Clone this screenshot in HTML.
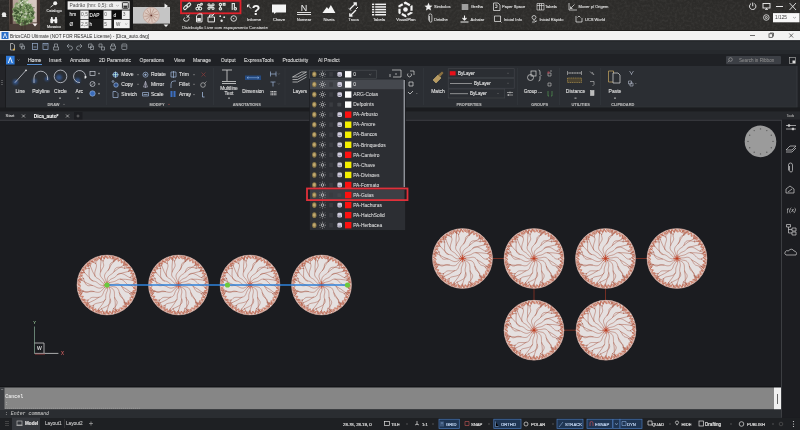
<!DOCTYPE html>
<html><head><meta charset="utf-8">
<style>
*{margin:0;padding:0}
html,body{width:800px;height:430px;overflow:hidden;background:#1b1c20}
svg{position:absolute;left:0;top:0;font-family:"Liberation Sans",sans-serif;will-change:transform}
</style></head><body>
<svg width="800" height="430" viewBox="0 0 800 430">
<defs><symbol id="tree" viewBox="-102 -102 204 204"><circle r="99" fill="#e5e0e0"/><path d="M88.0 0.0 L96.9 -3.9 M88.0 0.0 L96.9 3.9 M87.4 9.9 L96.7 7.0 M87.4 9.9 L95.9 14.7 M85.8 19.6 L95.4 17.8 M85.8 19.6 L93.6 25.3 M83.1 29.1 L92.8 28.4 M83.1 29.1 L90.2 35.7 M79.3 38.2 L89.0 38.6 M79.3 38.2 L85.6 45.5 M74.5 46.8 L84.1 48.3 M74.5 46.8 L80.0 54.9 M68.8 54.9 L78.2 57.4 M68.8 54.9 L73.4 63.5 M62.2 62.2 L71.3 65.8 M62.2 62.2 L65.8 71.3 M54.9 68.8 L63.5 73.4 M54.9 68.8 L57.4 78.2 M46.8 74.5 L54.9 80.0 M46.8 74.5 L48.3 84.1 M38.2 79.3 L45.5 85.6 M38.2 79.3 L38.6 89.0 M29.1 83.1 L35.7 90.2 M29.1 83.1 L28.4 92.8 M19.6 85.8 L25.3 93.6 M19.6 85.8 L17.8 95.4 M9.9 87.4 L14.7 95.9 M9.9 87.4 L7.0 96.7 M0.0 88.0 L3.9 96.9 M0.0 88.0 L-3.9 96.9 M-9.9 87.4 L-7.0 96.7 M-9.9 87.4 L-14.7 95.9 M-19.6 85.8 L-17.8 95.4 M-19.6 85.8 L-25.3 93.6 M-29.1 83.1 L-28.4 92.8 M-29.1 83.1 L-35.7 90.2 M-38.2 79.3 L-38.6 89.0 M-38.2 79.3 L-45.5 85.6 M-46.8 74.5 L-48.3 84.1 M-46.8 74.5 L-54.9 80.0 M-54.9 68.8 L-57.4 78.2 M-54.9 68.8 L-63.5 73.4 M-62.2 62.2 L-65.8 71.3 M-62.2 62.2 L-71.3 65.8 M-68.8 54.9 L-73.4 63.5 M-68.8 54.9 L-78.2 57.4 M-74.5 46.8 L-80.0 54.9 M-74.5 46.8 L-84.1 48.3 M-79.3 38.2 L-85.6 45.5 M-79.3 38.2 L-89.0 38.6 M-83.1 29.1 L-90.2 35.7 M-83.1 29.1 L-92.8 28.4 M-85.8 19.6 L-93.6 25.3 M-85.8 19.6 L-95.4 17.8 M-87.4 9.9 L-95.9 14.7 M-87.4 9.9 L-96.7 7.0 M-88.0 0.0 L-96.9 3.9 M-88.0 0.0 L-96.9 -3.9 M-87.4 -9.9 L-96.7 -7.0 M-87.4 -9.9 L-95.9 -14.7 M-85.8 -19.6 L-95.4 -17.8 M-85.8 -19.6 L-93.6 -25.3 M-83.1 -29.1 L-92.8 -28.4 M-83.1 -29.1 L-90.2 -35.7 M-79.3 -38.2 L-89.0 -38.6 M-79.3 -38.2 L-85.6 -45.5 M-74.5 -46.8 L-84.1 -48.3 M-74.5 -46.8 L-80.0 -54.9 M-68.8 -54.9 L-78.2 -57.4 M-68.8 -54.9 L-73.4 -63.5 M-62.2 -62.2 L-71.3 -65.8 M-62.2 -62.2 L-65.8 -71.3 M-54.9 -68.8 L-63.5 -73.4 M-54.9 -68.8 L-57.4 -78.2 M-46.8 -74.5 L-54.9 -80.0 M-46.8 -74.5 L-48.3 -84.1 M-38.2 -79.3 L-45.5 -85.6 M-38.2 -79.3 L-38.6 -89.0 M-29.1 -83.1 L-35.7 -90.2 M-29.1 -83.1 L-28.4 -92.8 M-19.6 -85.8 L-25.3 -93.6 M-19.6 -85.8 L-17.8 -95.4 M-9.9 -87.4 L-14.7 -95.9 M-9.9 -87.4 L-7.0 -96.7 M-0.0 -88.0 L-3.9 -96.9 M-0.0 -88.0 L3.9 -96.9 M9.9 -87.4 L7.0 -96.7 M9.9 -87.4 L14.7 -95.9 M19.6 -85.8 L17.8 -95.4 M19.6 -85.8 L25.3 -93.6 M29.1 -83.1 L28.4 -92.8 M29.1 -83.1 L35.7 -90.2 M38.2 -79.3 L38.6 -89.0 M38.2 -79.3 L45.5 -85.6 M46.8 -74.5 L48.3 -84.1 M46.8 -74.5 L54.9 -80.0 M54.9 -68.8 L57.4 -78.2 M54.9 -68.8 L63.5 -73.4 M62.2 -62.2 L65.8 -71.3 M62.2 -62.2 L71.3 -65.8 M68.8 -54.9 L73.4 -63.5 M68.8 -54.9 L78.2 -57.4 M74.5 -46.8 L80.0 -54.9 M74.5 -46.8 L84.1 -48.3 M79.3 -38.2 L85.6 -45.5 M79.3 -38.2 L89.0 -38.6 M83.1 -29.1 L90.2 -35.7 M83.1 -29.1 L92.8 -28.4 M85.8 -19.6 L93.6 -25.3 M85.8 -19.6 L95.4 -17.8 M87.4 -9.9 L95.9 -14.7 M87.4 -9.9 L96.7 -7.0 M96.0 2.9 L85.6 8.4 L94.7 15.9 L83.6 20.0 L91.6 28.7 L80.1 31.2 L86.9 40.9 L75.1 41.8 L80.5 52.3 L68.7 51.7 L72.6 62.8 L61.1 60.6 L63.4 72.1 L52.2 68.3 L53.0 80.1 L42.5 74.8 L41.6 86.5 L31.9 79.9 L29.4 91.4 L20.7 83.5 L16.7 94.5 L9.1 85.5 L3.7 95.9 L-2.6 86.0 L-9.4 95.5 L-14.3 84.8 L-22.3 93.4 L-25.7 82.1 L-34.8 89.5 L-36.6 77.8 L-46.7 83.9 L-46.9 72.1 L-57.7 76.7 L-56.3 65.1 L-67.6 68.2 L-64.6 56.8 L-76.3 58.3 L-71.7 47.5 L-83.5 47.4 L-77.5 37.3 L-89.2 35.6 L-81.9 26.4 L-93.2 23.1 L-84.7 15.0 L-95.5 10.2 L-85.9 3.3 L-96.0 -2.9 L-85.6 -8.4 L-94.7 -15.9 L-83.6 -20.0 L-91.6 -28.7 L-80.1 -31.2 L-86.9 -40.9 L-75.1 -41.8 L-80.5 -52.3 L-68.7 -51.7 L-72.6 -62.8 L-61.1 -60.6 L-63.4 -72.1 L-52.2 -68.3 L-53.0 -80.1 L-42.5 -74.8 L-41.6 -86.5 L-31.9 -79.9 L-29.4 -91.4 L-20.7 -83.5 L-16.7 -94.5 L-9.1 -85.5 L-3.7 -95.9 L2.6 -86.0 L9.4 -95.5 L14.3 -84.8 L22.3 -93.4 L25.7 -82.1 L34.8 -89.5 L36.6 -77.8 L46.7 -83.9 L46.9 -72.1 L57.7 -76.7 L56.3 -65.1 L67.6 -68.2 L64.6 -56.8 L76.3 -58.3 L71.7 -47.5 L83.5 -47.4 L77.5 -37.3 L89.2 -35.6 L81.9 -26.4 L93.2 -23.1 L84.7 -15.0 L95.5 -10.2 L85.9 -3.3 L96.0 2.9" fill="none" stroke="#c87058" stroke-width="2.2"/><circle r="98.5" fill="none" stroke="#d49a88" stroke-width="1.6"/><path d="M3.9 0.7 L6.4 1.4 L8.8 2.2 L11.2 3.0 L13.6 3.9 L16.0 4.6 L18.5 5.2 L21.0 5.7 L23.5 6.1 L26.0 6.6 L28.4 7.3 L30.8 8.3 L33.0 9.8 L35.0 11.8 L36.7 14.4 L38.2 17.4 L39.4 20.8 L40.3 24.3 L41.1 27.8 L41.8 31.1 L42.7 34.1 L43.9 36.7 L45.3 38.9 L47.1 40.7 L49.2 42.2 L51.3 43.6 L53.3 45.2 L55.0 47.0 L56.3 49.5 L56.9 52.6 L56.7 56.5 M56.7 56.5 L66.3 57.9 L75.0 59.9 M56.7 56.5 L58.1 66.1 L60.2 74.8 M40.6 25.6 Q50.1 38.2 59.5 59.3 M59.5 59.3 L72.0 63.5 M59.5 59.3 L63.8 71.7 M3.2 2.3 L5.3 3.8 L7.4 5.3 L9.5 6.7 L11.7 8.0 L13.9 9.3 L16.0 10.6 L18.0 12.2 L19.9 13.9 L21.5 16.1 L22.7 18.5 L23.6 21.4 L24.2 24.4 L24.4 27.7 L24.5 30.9 L24.5 34.1 L24.6 37.1 L24.9 39.9 L25.6 42.5 L26.7 44.8 L28.1 46.9 L29.6 48.9 L31.2 51.0 L32.5 53.1 L33.3 55.6 L33.4 58.4 L32.8 61.7 L31.2 65.3 L28.7 69.2 L25.4 73.2 L21.5 77.1 M21.5 77.1 L29.2 83.0 L35.8 89.1 M21.5 77.1 L18.0 86.1 L15.5 94.7 M25.2 40.9 Q28.2 56.4 27.3 79.4 M27.3 79.4 L36.6 88.7 M27.3 79.4 L25.8 92.5 M2.3 3.3 L3.8 5.3 L5.4 7.3 L6.9 9.3 L8.3 11.4 L9.5 13.7 L10.3 16.2 L10.8 18.8 L11.0 21.6 L10.8 24.5 L10.3 27.5 L9.7 30.3 L9.2 33.2 L8.8 35.9 L8.7 38.5 L8.9 41.0 L9.5 43.5 L10.2 45.9 L11.1 48.3 L11.8 50.8 L12.1 53.3 L11.9 56.0 L10.9 58.7 L9.0 61.6 L6.3 64.5 L2.8 67.3 L-1.3 69.9 L-5.7 72.2 L-10.1 74.3 L-14.1 76.2 L-17.6 78.0 M-17.6 78.0 L-13.6 86.9 L-10.7 95.4 M-17.6 78.0 L-25.0 84.4 L-31.2 90.8 M10.5 46.8 Q8.4 62.4 0.1 84.0 M0.1 84.0 L5.9 95.8 M0.1 84.0 L-5.6 95.8 M1.1 3.8 L1.7 6.3 L2.1 8.8 L2.3 11.4 L2.1 14.0 L1.6 16.6 L0.9 19.2 L-0.1 21.7 L-1.2 24.2 L-2.2 26.7 L-3.0 29.2 L-3.6 31.7 L-4.0 34.2 L-4.1 36.7 L-4.1 39.3 L-4.1 41.8 L-4.3 44.3 L-5.0 46.8 L-6.3 49.2 L-8.3 51.5 L-11.0 53.6 L-14.4 55.4 L-18.4 56.8 L-22.7 58.0 L-27.0 58.9 L-31.2 59.7 L-34.9 60.5 L-38.1 61.6 L-40.7 62.9 L-42.6 64.7 L-44.1 66.7 M-44.1 66.7 L-43.6 76.4 L-43.8 85.4 M-44.1 66.7 L-53.3 70.0 L-61.4 73.8 M-5.4 47.7 Q-12.6 61.7 -27.4 79.4 M-27.4 79.4 L-25.9 92.4 M-27.4 79.4 L-36.8 88.7 M-0.7 3.9 L-1.5 6.4 L-2.5 8.7 L-3.7 11.0 L-5.1 13.2 L-6.6 15.3 L-8.0 17.4 L-9.4 19.6 L-10.5 21.9 L-11.5 24.2 L-12.4 26.6 L-13.3 29.0 L-14.2 31.3 L-15.4 33.6 L-16.9 35.6 L-19.0 37.5 L-21.6 38.9 L-24.8 40.0 L-28.5 40.6 L-32.4 40.9 L-36.4 40.8 L-40.3 40.6 L-43.9 40.5 L-47.2 40.6 L-50.1 41.1 L-52.6 42.0 L-54.7 43.4 L-56.6 45.1 L-58.4 46.9 L-60.3 48.6 L-62.6 49.8 M-62.6 49.8 L-65.1 59.2 L-68.1 67.7 M-62.6 49.8 L-72.3 50.2 L-81.2 51.2 M-26.1 40.3 Q-38.8 49.6 -60.0 58.8 M-60.0 58.8 L-64.4 71.2 M-60.0 58.8 L-72.5 63.0 M-2.6 3.0 L-4.4 4.8 L-6.3 6.5 L-8.2 8.2 L-10.0 9.9 L-11.8 11.8 L-13.5 13.7 L-15.1 15.6 L-16.7 17.6 L-18.4 19.4 L-20.4 21.1 L-22.6 22.5 L-25.1 23.5 L-28.0 24.0 L-31.3 24.1 L-34.7 23.7 L-38.1 23.0 L-41.6 22.0 L-44.9 21.1 L-48.0 20.4 L-50.9 20.0 L-53.6 20.1 L-56.1 20.6 L-58.4 21.5 L-60.7 22.7 L-63.0 23.8 L-65.4 24.6 L-68.0 24.8 L-70.9 24.3 L-74.1 22.7 L-77.4 20.1 M-77.4 20.1 L-83.5 27.7 L-89.7 34.2 M-77.4 20.1 L-86.5 16.4 L-95.0 13.8 M-42.8 21.7 Q-58.5 23.4 -81.4 20.7 M-81.4 20.7 L-91.5 29.2 M-81.4 20.7 L-94.3 18.0 M-3.6 1.7 L-5.9 2.7 L-8.2 3.9 L-10.4 5.1 L-12.6 6.4 L-14.8 7.6 L-17.1 8.7 L-19.5 9.6 L-22.0 10.2 L-24.7 10.3 L-27.6 10.0 L-30.5 9.2 L-33.4 8.1 L-36.3 6.7 L-39.1 5.2 L-41.8 3.8 L-44.5 2.6 L-47.0 1.9 L-49.6 1.6 L-52.1 1.6 L-54.6 1.9 L-57.2 2.3 L-59.7 2.5 L-62.2 2.3 L-64.8 1.4 L-67.3 -0.3 L-69.8 -3.0 L-72.1 -6.6 L-74.1 -11.1 L-75.8 -16.1 L-77.1 -21.3 M-77.1 -21.3 L-86.2 -17.8 L-94.8 -15.3 M-77.1 -21.3 L-83.1 -29.0 L-89.1 -35.6 M-48.0 1.7 Q-62.9 -3.3 -82.6 -15.4 M-82.6 -15.4 L-95.3 -11.9 M-82.6 -15.4 L-93.2 -23.2 M-4.0 0.4 L-6.5 0.8 L-9.0 1.2 L-11.5 1.4 L-14.1 1.5 L-16.6 1.2 L-19.2 0.6 L-21.7 -0.4 L-24.2 -1.8 L-26.6 -3.4 L-28.9 -5.2 L-31.1 -7.1 L-33.3 -8.8 L-35.5 -10.2 L-37.8 -11.4 L-40.2 -12.2 L-42.7 -12.8 L-45.2 -13.2 L-47.7 -13.7 L-50.1 -14.5 L-52.4 -15.7 L-54.4 -17.6 L-56.2 -20.2 L-57.6 -23.6 L-58.6 -27.7 L-59.1 -32.3 L-59.1 -37.2 L-58.9 -42.0 L-58.7 -46.6 L-58.6 -50.7 L-58.8 -54.2 M-58.8 -54.2 L-68.5 -55.3 L-77.3 -57.0 M-58.8 -54.2 L-60.6 -63.8 L-63.0 -72.4 M-46.1 -13.4 Q-58.7 -22.8 -73.6 -40.5 M-73.6 -40.5 L-86.7 -41.1 M-73.6 -40.5 L-81.2 -51.2 M-3.9 -1.0 L-6.3 -1.7 L-8.7 -2.7 L-10.9 -3.9 L-13.1 -5.4 L-15.0 -7.2 L-16.9 -9.1 L-18.6 -11.2 L-20.3 -13.3 L-22.0 -15.2 L-23.9 -17.0 L-25.8 -18.6 L-28.0 -20.0 L-30.2 -21.3 L-32.4 -22.5 L-34.5 -23.9 L-36.5 -25.5 L-38.2 -27.6 L-39.4 -30.1 L-40.2 -33.2 L-40.4 -36.9 L-40.0 -40.9 L-39.2 -45.1 L-38.0 -49.3 L-36.7 -53.4 L-35.6 -57.2 L-34.8 -60.6 L-34.5 -63.6 L-34.9 -66.3 L-35.8 -68.7 L-37.1 -70.9 M-37.1 -70.9 L-45.8 -75.1 L-53.5 -79.7 M-37.1 -70.9 L-35.5 -80.5 L-34.9 -89.4 M-38.7 -28.4 Q-47.3 -41.6 -55.2 -63.3 M-55.2 -63.3 L-67.3 -68.5 M-55.2 -63.3 L-58.6 -76.0 M-3.0 -2.6 L-4.7 -4.6 L-6.2 -6.6 L-7.5 -8.8 L-8.7 -11.1 L-9.9 -13.4 L-11.1 -15.6 L-12.5 -17.8 L-14.0 -19.8 L-15.6 -21.8 L-17.3 -23.7 L-18.9 -25.6 L-20.4 -27.7 L-21.6 -29.9 L-22.4 -32.5 L-22.7 -35.3 L-22.4 -38.5 L-21.5 -41.9 L-20.1 -45.3 L-18.3 -48.8 L-16.3 -52.2 L-14.4 -55.4 L-12.8 -58.4 L-11.6 -61.2 L-11.0 -63.9 L-11.0 -66.4 L-11.5 -68.9 L-12.1 -71.4 L-12.8 -73.8 L-13.1 -76.4 L-12.7 -79.0 M-12.7 -79.0 L-19.6 -85.8 L-25.5 -92.5 M-12.7 -79.0 L-8.2 -87.6 L-4.7 -95.9 M-21.0 -43.1 Q-22.5 -58.8 -19.5 -81.7 M-19.5 -81.7 L-27.8 -91.9 M-19.5 -81.7 L-16.6 -94.6 M-1.3 -3.8 L-1.9 -6.2 L-2.5 -8.7 L-3.1 -11.2 L-3.8 -13.6 L-4.6 -16.0 L-5.5 -18.4 L-6.4 -20.8 L-7.2 -23.2 L-7.9 -25.6 L-8.2 -28.2 L-8.1 -30.8 L-7.4 -33.6 L-6.2 -36.4 L-4.5 -39.2 L-2.4 -41.9 L-0.0 -44.5 L2.4 -47.0 L4.6 -49.4 L6.4 -51.7 L7.9 -54.1 L8.8 -56.5 L9.2 -59.0 L9.4 -61.6 L9.5 -64.1 L9.8 -66.6 L10.5 -69.1 L12.1 -71.4 L14.5 -73.5 L17.9 -75.4 L22.4 -76.8 M22.4 -76.8 L19.0 -85.9 L16.5 -94.6 M22.4 -76.8 L30.1 -82.7 L36.8 -88.7 M3.2 -47.9 Q9.7 -62.2 23.8 -80.6 M23.8 -80.6 L21.6 -93.5 M23.8 -80.6 L32.6 -90.3 M0.3 -4.0 L0.5 -6.5 L0.6 -9.0 L0.6 -11.6 L0.6 -14.1 L0.6 -16.7 L0.9 -19.2 L1.4 -21.7 L2.4 -24.1 L3.8 -26.5 L5.6 -28.8 L7.9 -30.9 L10.3 -32.8 L12.9 -34.6 L15.5 -36.3 L17.8 -38.0 L19.8 -39.9 L21.5 -41.9 L22.8 -44.0 L23.8 -46.4 L24.7 -48.8 L25.7 -51.1 L26.9 -53.3 L28.6 -55.3 L31.0 -56.9 L34.2 -58.0 L38.2 -58.5 L42.8 -58.4 L47.8 -57.7 L52.9 -56.6 L58.0 -55.1 M58.0 -55.1 L59.7 -64.7 L61.9 -73.4 M58.0 -55.1 L67.6 -56.3 L76.4 -58.1 M22.0 -42.7 Q33.7 -53.2 53.9 -64.4 M53.9 -64.4 L57.1 -77.2 M53.9 -64.4 L65.9 -69.8 M1.5 -3.7 L2.5 -6.1 L3.4 -8.4 L4.5 -10.7 L5.8 -12.9 L7.4 -14.9 L9.3 -16.8 L11.6 -18.4 L14.0 -19.8 L16.6 -21.0 L19.3 -22.1 L21.8 -23.2 L24.2 -24.4 L26.4 -25.8 L28.4 -27.4 L30.2 -29.2 L31.8 -31.2 L33.4 -33.1 L35.2 -35.0 L37.2 -36.6 L39.6 -37.7 L42.5 -38.3 L45.9 -38.2 L49.8 -37.4 L54.0 -35.9 L58.2 -33.9 L62.4 -31.5 L66.3 -29.0 L70.0 -26.8 L73.3 -25.1 L76.3 -24.1 M76.3 -24.1 L82.0 -32.0 L87.8 -38.8 M76.3 -24.1 L85.5 -20.9 L94.2 -18.7 M34.0 -33.8 Q48.4 -40.3 71.1 -44.8 M71.1 -44.8 L78.0 -56.0 M71.1 -44.8 L84.1 -46.2 M2.8 -2.9 L4.7 -4.6 L6.7 -6.1 L9.0 -7.4 L11.4 -8.4 L13.9 -9.2 L16.5 -9.8 L19.1 -10.3 L21.7 -10.9 L24.2 -11.6 L26.6 -12.4 L28.9 -13.5 L31.1 -14.8 L33.2 -16.1 L35.4 -17.4 L37.7 -18.5 L40.2 -19.2 L42.9 -19.3 L45.9 -18.8 L49.1 -17.6 L52.4 -15.6 L55.7 -13.1 L58.8 -10.2 L61.8 -7.2 L64.7 -4.3 L67.3 -1.8 L69.9 0.1 L72.4 1.3 L74.9 1.9 L77.4 2.0 L80.0 1.8 M80.0 1.8 L87.9 -3.8 L95.6 -8.4 M80.0 1.8 L87.7 7.8 L95.2 12.7 M44.0 -19.2 Q59.7 -20.0 82.5 -16.0 M82.5 -16.0 L93.0 -23.9 M82.5 -16.0 L95.2 -12.6 M3.8 -1.2 L6.3 -1.7 L8.9 -1.9 L11.4 -1.9 L14.0 -1.9 L16.6 -1.9 L19.1 -2.0 L21.6 -2.2 L24.1 -2.6 L26.6 -3.1 L29.1 -3.6 L31.6 -4.1 L34.1 -4.2 L36.7 -3.9 L39.3 -3.1 L42.0 -1.6 L44.5 0.5 L47.0 3.2 L49.2 6.2 L51.3 9.5 L53.2 12.7 L55.0 15.7 L56.9 18.2 L58.9 20.2 L61.1 21.7 L63.4 22.6 L65.9 23.3 L68.4 23.9 L70.8 24.7 L73.0 26.0 L74.9 28.1 M74.9 28.1 L84.3 25.4 L93.1 23.6 M74.9 28.1 L80.2 36.2 L85.7 43.3 M47.8 4.3 Q62.0 11.1 80.0 25.5 M80.0 25.5 L93.0 23.6 M80.0 25.5 L89.5 34.6" fill="none" stroke="#a45440" stroke-width="1.55" stroke-linecap="round"/><path d="M-12 0 H12 M0 -12 V12 M-8.5 -8.5 L8.5 8.5 M-8.5 8.5 L8.5 -8.5" stroke="#cc4426" stroke-width="2.2"/><circle r="3" fill="#b83a20"/></symbol><radialGradient id="stone" cx="0.5" cy="0.5" r="0.8"><stop offset="0" stop-color="#2f2e2c"/><stop offset="1" stop-color="#2b2a28"/></radialGradient><filter id="noise" x="0" y="0" width="100%" height="100%"><feTurbulence type="fractalNoise" baseFrequency="0.4" numOctaves="2" seed="5"/><feColorMatrix type="matrix" values="0 0 0 0 0.25  0 0 0 0 0.24  0 0 0 0 0.23  0.9 0 0 0 -0.35"/></filter><radialGradient id="treeg" cx="0.45" cy="0.42" r="0.45"><stop offset="0" stop-color="#4f6b3a"/><stop offset="0.6" stop-color="#5d7a48"/><stop offset="1" stop-color="#8a9270" stop-opacity="0"/></radialGradient><linearGradient id="photobg" x1="0" y1="0" x2="0" y2="1"><stop offset="0" stop-color="#b9a69c"/><stop offset="0.55" stop-color="#a08d83"/><stop offset="1" stop-color="#5a4a42"/></linearGradient><filter id="glow" x="-1" y="-1" width="3" height="3"><feGaussianBlur stdDeviation="1.1"/></filter></defs>
<rect x="0" y="0" width="800" height="31" fill="url(#stone)" />
<rect x="0" y="0" width="800" height="31" filter="url(#noise)" opacity="0.3"/>
<rect x="0" y="30" width="800" height="1" fill="#1e1d1c" />
<rect x="0" y="31" width="800" height="9.5" fill="#f2f2f2" />
<rect x="0" y="40.5" width="800" height="13.5" fill="#2a2d31" />
<rect x="0" y="40.5" width="800" height="0.8" fill="#1f2124" />
<rect x="0" y="50" width="800" height="4" fill="#26292d" />
<rect x="0" y="54" width="800" height="12" fill="#1f2125" />
<rect x="0" y="66" width="800" height="45" fill="#1f2125" />
<rect x="0" y="66" width="5" height="42" fill="#232428" />
<rect x="5" y="66" width="1" height="42" fill="#1a1b1e" />
<rect x="6" y="66" width="791" height="41.5" fill="#2b2e33" />
<rect x="796.5" y="66" width="1" height="41.5" fill="#36393e" />
<rect x="6" y="106.7" width="791" height="0.8" fill="#33363b" />
<rect x="0" y="107.5" width="800" height="3.8" fill="#1b1c1f" />
<rect x="0" y="111.3" width="800" height="8.5" fill="#26282c" />
<rect x="0" y="119.8" width="782" height="1" fill="#46484c" />
<rect x="0" y="120.8" width="781" height="265.2" fill="#1b1c20" />
<rect x="781" y="119.8" width="19" height="298" fill="#1c1d21" />
<rect x="781" y="119.8" width="1" height="298" fill="#3c3e42" />
<rect x="0" y="386" width="781" height="1.5" fill="#141518" />
<rect x="0" y="387.5" width="774" height="22" fill="#868686" />
<rect x="774" y="387.5" width="7" height="22" fill="#f0f0f0" />
<rect x="0" y="409.5" width="781" height="8.5" fill="#2a2d31" />
<rect x="0" y="418" width="800" height="12" fill="#1e2023" />
<rect x="65" y="0" width="68" height="30" fill="#181818" />
<g fill="#e8e8e8"><circle cx="4" cy="14.5" r="2.2"/><path d="M1.5 17 L6.5 17 L5.5 14 Z"/></g>
<rect x="9.5" y="0" width="30.5" height="30" fill="url(#photobg)" />
<rect x="27" y="0" width="11" height="22" fill="#e0d2ca" opacity="0.8"/>
<rect x="9.5" y="0" width="3.2" height="30" fill="#3b2d28" />
<rect x="36.8" y="0" width="3.2" height="30" fill="#4a3833" />
<rect x="9.5" y="24" width="30.5" height="6" fill="#4a3e38" />
<ellipse cx="23.5" cy="13.5" rx="10.5" ry="12" fill="#5e7a4a"/>
<ellipse cx="22" cy="17" rx="8" ry="7" fill="#3e5632"/>
<circle cx="21.9" cy="16.1" r="0.6" fill="#4d6a3c"/>
<circle cx="17.4" cy="11.0" r="1.3" fill="#4d6a3c"/>
<circle cx="24.1" cy="15.3" r="0.6" fill="#c0c8b0"/>
<circle cx="29.2" cy="16.6" r="1.4" fill="#6a8a50"/>
<circle cx="17.9" cy="5.8" r="1.0" fill="#4d6a3c"/>
<circle cx="14.5" cy="20.0" r="1.0" fill="#4d6a3c"/>
<circle cx="28.0" cy="18.1" r="1.0" fill="#6a8a50"/>
<circle cx="15.1" cy="8.8" r="1.0" fill="#6a8a50"/>
<circle cx="19.4" cy="7.2" r="1.0" fill="#6a8a50"/>
<circle cx="18.0" cy="6.9" r="1.2" fill="#c0c8b0"/>
<circle cx="12.9" cy="15.1" r="0.8" fill="#3e5430"/>
<circle cx="26.0" cy="2.7" r="1.0" fill="#e0e6d6"/>
<circle cx="30.2" cy="5.1" r="1.0" fill="#7a9a60"/>
<circle cx="30.3" cy="16.2" r="1.2" fill="#8aa070"/>
<circle cx="27.8" cy="19.2" r="1.4" fill="#4d6a3c"/>
<circle cx="30.6" cy="16.7" r="0.8" fill="#3e5430"/>
<circle cx="19.1" cy="19.2" r="0.6" fill="#98ac80"/>
<circle cx="27.8" cy="15.7" r="0.6" fill="#6a8a50"/>
<circle cx="20.9" cy="3.2" r="1.3" fill="#e0e6d6"/>
<circle cx="17.2" cy="22.5" r="0.7" fill="#3e5430"/>
<circle cx="25.0" cy="14.0" r="0.6" fill="#7a9a60"/>
<circle cx="23.6" cy="19.7" r="0.6" fill="#98ac80"/>
<circle cx="15.9" cy="15.3" r="1.2" fill="#8aa070"/>
<circle cx="27.0" cy="8.1" r="1.4" fill="#c0c8b0"/>
<circle cx="20.9" cy="6.1" r="0.6" fill="#a8b890"/>
<circle cx="25.6" cy="17.2" r="0.5" fill="#a8b890"/>
<circle cx="25.5" cy="8.5" r="0.5" fill="#7a9a60"/>
<circle cx="18.0" cy="15.9" r="1.4" fill="#3e5430"/>
<circle cx="20.7" cy="4.6" r="1.2" fill="#a8bc90"/>
<circle cx="18.4" cy="17.0" r="0.9" fill="#6a8a50"/>
<circle cx="20.1" cy="15.2" r="0.9" fill="#a8b890"/>
<circle cx="30.0" cy="18.4" r="0.5" fill="#6a8a50"/>
<circle cx="25.2" cy="15.1" r="1.1" fill="#3e5430"/>
<circle cx="27.5" cy="14.6" r="0.6" fill="#c0c8b0"/>
<circle cx="23.4" cy="19.2" r="0.9" fill="#3e5430"/>
<circle cx="29.0" cy="17.9" r="0.9" fill="#98ac80"/>
<circle cx="22.1" cy="16.1" r="1.2" fill="#3e5430"/>
<circle cx="14.4" cy="13.9" r="0.7" fill="#4d6a3c"/>
<circle cx="29.4" cy="10.5" r="1.2" fill="#4d6a3c"/>
<circle cx="20.9" cy="21.7" r="1.1" fill="#6a8a50"/>
<circle cx="23.1" cy="19.4" r="0.8" fill="#8aa070"/>
<circle cx="24.8" cy="21.1" r="1.1" fill="#3e5430"/>
<circle cx="16.0" cy="5.4" r="1.2" fill="#a8b890"/>
<circle cx="27.5" cy="2.9" r="0.8" fill="#e0e6d6"/>
<circle cx="24.8" cy="12.8" r="0.9" fill="#7a9a60"/>
<circle cx="26.4" cy="21.2" r="0.9" fill="#3e5430"/>
<circle cx="33.9" cy="7.7" r="0.6" fill="#3e5430"/>
<circle cx="29.3" cy="17.3" r="0.7" fill="#3e5430"/>
<circle cx="15.9" cy="4.2" r="0.8" fill="#a8bc90"/>
<circle cx="17.1" cy="3.6" r="1.2" fill="#6a8a50"/>
<circle cx="23.5" cy="4.4" r="0.8" fill="#a8bc90"/>
<circle cx="27.0" cy="0.7" r="1.4" fill="#a8bc90"/>
<circle cx="22.9" cy="8.2" r="0.5" fill="#8aa070"/>
<circle cx="17.4" cy="8.2" r="1.1" fill="#8aa070"/>
<circle cx="17.5" cy="7.9" r="0.6" fill="#3e5430"/>
<circle cx="22.4" cy="12.1" r="1.0" fill="#6a8a50"/>
<circle cx="29.8" cy="9.4" r="1.2" fill="#a8b890"/>
<circle cx="24.7" cy="17.8" r="1.0" fill="#7a9a60"/>
<circle cx="24.0" cy="6.1" r="1.3" fill="#c0c8b0"/>
<circle cx="32.3" cy="16.4" r="1.1" fill="#98ac80"/>
<circle cx="26.5" cy="4.7" r="1.0" fill="#8aa070"/>
<circle cx="30.4" cy="13.4" r="1.0" fill="#8aa070"/>
<circle cx="24.1" cy="8.5" r="0.9" fill="#8aa070"/>
<circle cx="22.3" cy="3.7" r="1.0" fill="#3e5430"/>
<circle cx="13.8" cy="13.7" r="0.7" fill="#4d6a3c"/>
<circle cx="21.9" cy="23.1" r="1.0" fill="#98ac80"/>
<circle cx="24.2" cy="0.6" r="1.0" fill="#a8bc90"/>
<circle cx="25.2" cy="18.0" r="1.0" fill="#98ac80"/>
<circle cx="23.6" cy="21.0" r="1.3" fill="#7a9a60"/>
<circle cx="26.9" cy="9.5" r="0.6" fill="#98ac80"/>
<circle cx="28.5" cy="17.8" r="1.1" fill="#6a8a50"/>
<circle cx="19.4" cy="14.7" r="1.2" fill="#7a9a60"/>
<circle cx="26.5" cy="10.0" r="0.6" fill="#3e5430"/>
<circle cx="31.8" cy="4.2" r="0.6" fill="#a8b890"/>
<circle cx="26.4" cy="9.7" r="0.6" fill="#a8b890"/>
<circle cx="16.5" cy="16.0" r="0.9" fill="#3e5430"/>
<circle cx="21.8" cy="14.9" r="0.5" fill="#3e5430"/>
<circle cx="16.9" cy="9.9" r="0.8" fill="#4d6a3c"/>
<circle cx="18.0" cy="11.8" r="0.6" fill="#6a8a50"/>
<circle cx="27.6" cy="10.0" r="0.6" fill="#6a8a50"/>
<circle cx="22.0" cy="24.3" r="0.7" fill="#8aa070"/>
<circle cx="28.2" cy="18.0" r="0.9" fill="#7a9a60"/>
<circle cx="16.0" cy="10.6" r="1.1" fill="#98ac80"/>
<circle cx="25.2" cy="13.7" r="0.9" fill="#8aa070"/>
<circle cx="33.4" cy="17.8" r="1.2" fill="#6a8a50"/>
<circle cx="32.5" cy="18.3" r="0.7" fill="#6a8a50"/>
<circle cx="24.1" cy="13.1" r="1.3" fill="#c0c8b0"/>
<circle cx="23.1" cy="16.2" r="1.3" fill="#a8b890"/>
<circle cx="28.5" cy="11.4" r="0.7" fill="#8aa070"/>
<circle cx="21.4" cy="18.2" r="0.8" fill="#a8b890"/>
<circle cx="19.5" cy="12.5" r="1.2" fill="#3e5430"/>
<circle cx="25.1" cy="12.4" r="1.2" fill="#4d6a3c"/>
<circle cx="19.5" cy="11.0" r="0.7" fill="#98ac80"/>
<circle cx="15.1" cy="15.7" r="1.1" fill="#c0c8b0"/>
<circle cx="13.3" cy="9.2" r="1.1" fill="#7a9a60"/>
<circle cx="29.5" cy="11.8" r="0.9" fill="#8aa070"/>
<circle cx="22.4" cy="14.3" r="0.5" fill="#8aa070"/>
<circle cx="16.1" cy="4.2" r="1.1" fill="#c8d4b8"/>
<circle cx="17.9" cy="18.2" r="1.0" fill="#7a9a60"/>
<circle cx="22.9" cy="10.7" r="0.6" fill="#8aa070"/>
<circle cx="18.7" cy="14.4" r="1.4" fill="#3e5430"/>
<circle cx="18.8" cy="10.9" r="0.7" fill="#7a9a60"/>
<circle cx="25.9" cy="18.5" r="0.9" fill="#6a8a50"/>
<circle cx="19.1" cy="12.4" r="0.6" fill="#4d6a3c"/>
<circle cx="25.0" cy="8.9" r="0.9" fill="#4d6a3c"/>
<circle cx="20.8" cy="21.6" r="1.0" fill="#6a8a50"/>
<circle cx="14.1" cy="10.6" r="1.2" fill="#c0c8b0"/>
<circle cx="22.1" cy="4.4" r="1.1" fill="#7a9a60"/>
<circle cx="33.3" cy="15.6" r="1.2" fill="#c0c8b0"/>
<circle cx="24.8" cy="8.9" r="1.2" fill="#4d6a3c"/>
<circle cx="14.3" cy="6.6" r="0.6" fill="#a8b890"/>
<circle cx="31.9" cy="15.0" r="0.8" fill="#6a8a50"/>
<circle cx="21.7" cy="13.1" r="1.1" fill="#4d6a3c"/>
<circle cx="20.4" cy="5.1" r="0.9" fill="#4d6a3c"/>
<circle cx="33.4" cy="17.7" r="1.1" fill="#6a8a50"/>
<circle cx="32.2" cy="16.7" r="1.2" fill="#7a9a60"/>
<circle cx="26.2" cy="8.2" r="0.7" fill="#a8b890"/>
<circle cx="19.3" cy="6.1" r="0.6" fill="#c0c8b0"/>
<circle cx="28.1" cy="9.3" r="1.1" fill="#4d6a3c"/>
<circle cx="22.0" cy="10.4" r="0.8" fill="#8aa070"/>
<circle cx="18.2" cy="4.3" r="0.9" fill="#c8d4b8"/>
<circle cx="26.3" cy="12.0" r="1.1" fill="#a8b890"/>
<circle cx="21.6" cy="20.7" r="0.9" fill="#98ac80"/>
<circle cx="24.7" cy="0.0" r="1.3" fill="#c8d4b8"/>
<circle cx="30.6" cy="13.4" r="1.4" fill="#98ac80"/>
<circle cx="15.3" cy="20.3" r="0.6" fill="#a8b890"/>
<circle cx="31.6" cy="18.2" r="1.4" fill="#7a9a60"/>
<circle cx="30.3" cy="20.8" r="1.3" fill="#7a9a60"/>
<circle cx="22.1" cy="7.5" r="0.9" fill="#98ac80"/>
<circle cx="29.5" cy="22.8" r="0.9" fill="#98ac80"/>
<circle cx="22.5" cy="5.1" r="0.8" fill="#c0c8b0"/>
<circle cx="23.6" cy="12.3" r="1.3" fill="#3e5430"/>
<circle cx="31.4" cy="20.7" r="1.3" fill="#4d6a3c"/>
<circle cx="21.9" cy="19.2" r="0.9" fill="#c0c8b0"/>
<circle cx="25.2" cy="10.5" r="1.2" fill="#c0c8b0"/>
<circle cx="26.7" cy="7.8" r="1.3" fill="#4d6a3c"/>
<circle cx="21.1" cy="24.3" r="1.4" fill="#a8b890"/>
<circle cx="18.2" cy="15.0" r="1.2" fill="#3e5430"/>
<circle cx="22.3" cy="13.2" r="1.3" fill="#c0c8b0"/>
<circle cx="30.9" cy="9.3" r="0.5" fill="#6a8a50"/>
<circle cx="22.7" cy="4.7" r="0.8" fill="#8aa070"/>
<circle cx="33.9" cy="16.1" r="0.7" fill="#8aa070"/>
<circle cx="18.9" cy="15.5" r="1.2" fill="#7a9a60"/>
<circle cx="28.5" cy="11.7" r="0.8" fill="#a8b890"/>
<circle cx="17.4" cy="10.0" r="1.1" fill="#8aa070"/>
<circle cx="30.2" cy="16.3" r="1.0" fill="#98ac80"/>
<circle cx="17.9" cy="14.4" r="0.9" fill="#98ac80"/>
<circle cx="18.8" cy="10.9" r="0.8" fill="#8aa070"/>
<circle cx="27.6" cy="15.4" r="1.2" fill="#7a9a60"/>
<circle cx="23.8" cy="13.7" r="0.8" fill="#c0c8b0"/>
<circle cx="23.4" cy="7.6" r="0.8" fill="#7a9a60"/>
<circle cx="28.4" cy="14.7" r="0.6" fill="#3e5430"/>
<circle cx="14.9" cy="12.3" r="0.6" fill="#a8b890"/>
<circle cx="28.6" cy="8.2" r="0.9" fill="#98ac80"/>
<circle cx="19.7" cy="22.8" r="0.6" fill="#4d6a3c"/>
<circle cx="14.9" cy="17.4" r="1.4" fill="#98ac80"/>
<circle cx="21.1" cy="12.7" r="1.4" fill="#98ac80"/>
<circle cx="23.5" cy="15.8" r="0.6" fill="#8aa070"/>
<circle cx="26.5" cy="11.9" r="0.6" fill="#98ac80"/>
<circle cx="23.5" cy="12.3" r="0.7" fill="#8aa070"/>
<circle cx="31.2" cy="7.8" r="1.4" fill="#7a9a60"/>
<circle cx="18.1" cy="6.4" r="1.1" fill="#c0c8b0"/>
<circle cx="25.3" cy="14.2" r="0.8" fill="#a8b890"/>
<circle cx="24.9" cy="21.7" r="1.0" fill="#4d6a3c"/>
<circle cx="28.8" cy="12.4" r="1.1" fill="#3e5430"/>
<circle cx="28.9" cy="7.1" r="1.0" fill="#a8b890"/>
<circle cx="30.1" cy="13.9" r="0.5" fill="#7a9a60"/>
<circle cx="27.1" cy="23.5" r="0.6" fill="#c0c8b0"/>
<circle cx="24.4" cy="20.0" r="0.7" fill="#3e5430"/>
<circle cx="29.3" cy="13.9" r="0.8" fill="#c0c8b0"/>
<circle cx="23.0" cy="12.9" r="1.2" fill="#7a9a60"/>
<circle cx="19.1" cy="12.4" r="0.8" fill="#a8b890"/>
<circle cx="25.5" cy="7.8" r="0.7" fill="#a8b890"/>
<circle cx="25.8" cy="10.4" r="1.0" fill="#98ac80"/>
<circle cx="29.4" cy="7.6" r="1.4" fill="#4d6a3c"/>
<circle cx="27.4" cy="18.2" r="0.5" fill="#a8b890"/>
<circle cx="18.0" cy="8.3" r="0.7" fill="#4d6a3c"/>
<circle cx="14.7" cy="15.7" r="1.2" fill="#3e5430"/>
<circle cx="34.4" cy="12.3" r="0.7" fill="#3e5430"/>
<circle cx="19.0" cy="5.5" r="0.5" fill="#98ac80"/>
<circle cx="20.2" cy="6.5" r="1.4" fill="#3e5430"/>
<circle cx="20.7" cy="13.7" r="0.8" fill="#6a8a50"/>
<circle cx="16.9" cy="22.4" r="1.0" fill="#6a8a50"/>
<circle cx="23.9" cy="5.5" r="1.2" fill="#7a9a60"/>
<circle cx="21.8" cy="13.4" r="0.7" fill="#98ac80"/>
<circle cx="16.7" cy="10.5" r="0.8" fill="#3e5430"/>
<circle cx="24.6" cy="11.6" r="0.7" fill="#c0c8b0"/>
<circle cx="18.8" cy="7.3" r="0.5" fill="#c0c8b0"/>
<circle cx="33.5" cy="17.1" r="0.7" fill="#7a9a60"/>
<circle cx="31.3" cy="16.1" r="0.7" fill="#3e5430"/>
<circle cx="31.7" cy="10.0" r="1.2" fill="#7a9a60"/>
<circle cx="19.5" cy="1.3" r="1.3" fill="#a8bc90"/>
<circle cx="16.2" cy="3.4" r="0.6" fill="#4d6a3c"/>
<circle cx="22.0" cy="4.7" r="1.3" fill="#c0c8b0"/>
<circle cx="24.8" cy="9.1" r="0.7" fill="#98ac80"/>
<circle cx="26.6" cy="2.6" r="0.8" fill="#8aa070"/>
<circle cx="20.9" cy="18.7" r="1.0" fill="#6a8a50"/>
<circle cx="20.6" cy="15.1" r="0.6" fill="#c0c8b0"/>
<circle cx="31.3" cy="14.4" r="0.6" fill="#3e5430"/>
<circle cx="20.9" cy="14.0" r="0.7" fill="#6a8a50"/>
<circle cx="25.9" cy="14.1" r="1.4" fill="#98ac80"/>
<circle cx="27.4" cy="11.7" r="0.9" fill="#8aa070"/>
<circle cx="17.0" cy="5.7" r="1.2" fill="#6a8a50"/>
<circle cx="22.1" cy="18.1" r="0.8" fill="#7a9a60"/>
<circle cx="23.2" cy="7.7" r="0.7" fill="#a8b890"/>
<circle cx="24.0" cy="18.4" r="0.8" fill="#a8b890"/>
<circle cx="14.5" cy="20.1" r="1.1" fill="#a8b890"/>
<circle cx="29.3" cy="17.2" r="0.6" fill="#4d6a3c"/>
<circle cx="13.5" cy="14.3" r="1.3" fill="#98ac80"/>
<circle cx="28.8" cy="14.0" r="0.5" fill="#6a8a50"/>
<circle cx="15.3" cy="5.9" r="1.3" fill="#a8b890"/>
<circle cx="16.2" cy="20.8" r="1.0" fill="#98ac80"/>
<circle cx="24.9" cy="2.8" r="1.1" fill="#a8bc90"/>
<circle cx="22.6" cy="13.9" r="0.6" fill="#3e5430"/>
<circle cx="24.9" cy="17.8" r="1.2" fill="#a8b890"/>
<circle cx="26.3" cy="5.8" r="0.7" fill="#3e5430"/>
<circle cx="21.8" cy="17.0" r="1.0" fill="#98ac80"/>
<circle cx="26.2" cy="13.7" r="1.1" fill="#c0c8b0"/>
<circle cx="27.9" cy="19.6" r="0.9" fill="#8aa070"/>
<circle cx="22.0" cy="24.9" r="0.9" fill="#7a9a60"/>
<circle cx="32.6" cy="15.8" r="0.9" fill="#3e5430"/>
<circle cx="33.2" cy="13.7" r="1.1" fill="#3e5430"/>
<circle cx="18.4" cy="17.1" r="0.9" fill="#4d6a3c"/>
<circle cx="25.2" cy="15.3" r="0.9" fill="#6a8a50"/>
<circle cx="28.8" cy="7.2" r="0.6" fill="#8aa070"/>
<circle cx="26.9" cy="13.7" r="0.6" fill="#c0c8b0"/>
<circle cx="19.0" cy="7.7" r="0.6" fill="#8aa070"/>
<circle cx="21.9" cy="20.8" r="0.6" fill="#6a8a50"/>
<circle cx="13.5" cy="13.2" r="0.8" fill="#a8b890"/>
<circle cx="24.4" cy="10.9" r="0.8" fill="#98ac80"/>
<circle cx="16.7" cy="6.5" r="1.3" fill="#6a8a50"/>
<circle cx="16.1" cy="4.8" r="1.3" fill="#8aa070"/>
<circle cx="17.3" cy="6.0" r="1.2" fill="#a8b890"/>
<circle cx="25.4" cy="17.1" r="1.3" fill="#c0c8b0"/>
<circle cx="26.9" cy="18.2" r="0.7" fill="#8aa070"/>
<circle cx="21.8" cy="0.8" r="1.3" fill="#4d6a3c"/>
<circle cx="19.3" cy="3.8" r="0.9" fill="#a8bc90"/>
<circle cx="29.2" cy="3.7" r="0.9" fill="#c8d4b8"/>
<circle cx="19.7" cy="6.0" r="0.7" fill="#98ac80"/>
<circle cx="34.8" cy="12.8" r="0.7" fill="#98ac80"/>
<circle cx="24.3" cy="1.7" r="1.2" fill="#98ac80"/>
<circle cx="21.7" cy="14.0" r="0.9" fill="#3e5430"/>
<circle cx="29.4" cy="16.7" r="0.5" fill="#4d6a3c"/>
<circle cx="30.9" cy="21.3" r="1.2" fill="#3e5430"/>
<circle cx="21.5" cy="12.3" r="1.1" fill="#c0c8b0"/>
<circle cx="23.8" cy="11.1" r="1.4" fill="#6a8a50"/>
<circle cx="22.4" cy="1.4" r="0.8" fill="#e0e6d6"/>
<circle cx="27.2" cy="2.3" r="1.0" fill="#e0e6d6"/>
<circle cx="23.4" cy="18.9" r="1.3" fill="#7a9a60"/>
<circle cx="18.7" cy="14.0" r="0.7" fill="#98ac80"/>
<circle cx="22.9" cy="20.8" r="0.8" fill="#3e5430"/>
<circle cx="25.6" cy="19.4" r="1.1" fill="#7a9a60"/>
<circle cx="26.6" cy="9.9" r="0.6" fill="#7a9a60"/>
<circle cx="15.0" cy="10.7" r="1.4" fill="#3e5430"/>
<circle cx="16.1" cy="15.0" r="0.7" fill="#6a8a50"/>
<circle cx="13.4" cy="9.9" r="0.7" fill="#3e5430"/>
<circle cx="31.7" cy="12.0" r="0.8" fill="#3e5430"/>
<circle cx="27.6" cy="15.1" r="0.8" fill="#4d6a3c"/>
<circle cx="17.9" cy="11.9" r="1.2" fill="#3e5430"/>
<circle cx="23.4" cy="7.4" r="1.1" fill="#7a9a60"/>
<path d="M22 22 v8 M25 21 v9" stroke="#3a3028" stroke-width="0.8"/>
<path d="M32.5 23.5 L37.5 23.5 L35 26.5 Z" fill="#f4eeee"/>
<circle cx="55.2" cy="3.2" r="2" fill="#f2f2f2"/><line x1="50.5" y1="7.2" x2="53.8" y2="4.6" stroke="#e0e0e0" stroke-width="0.9"/>
<text x="54.2" y="12.23" font-size="3.8" fill="#e8e8e8" stroke="#e8e8e8" stroke-width="0.1" text-anchor="middle" font-weight="normal" font-family="Liberation Sans" >Catalogo</text>
<g fill="#f2f2f2"><rect x="50.3" y="18.5" width="2.8" height="4.8" rx="1"/><rect x="54.5" y="18.5" width="2.8" height="4.8" rx="1"/><rect x="51" y="17" width="1.6" height="2.5"/><rect x="55.2" y="17" width="1.6" height="2.5"/><rect x="52.5" y="19.5" width="2.5" height="1.8"/></g>
<text x="54" y="27.93" font-size="3.8" fill="#e8e8e8" stroke="#e8e8e8" stroke-width="0.1" text-anchor="middle" font-weight="normal" font-family="Liberation Sans" >Mosaico</text>
<rect x="67.6" y="1.3" width="53.4" height="8.3" fill="#eeeeee" />
<text x="69.5" y="7.21" font-size="4.9" fill="#505050"  text-anchor="start" font-weight="normal" font-family="Liberation Sans" >Padrão (hm: 0,5): dt</text>
<path d="M116 5 l1.5 1.2 l1.5 -1.2" stroke="#888" stroke-width="0.5" fill="none"/>
<rect x="121" y="1.3" width="8.7" height="8.3" fill="#dcdcdc" />
<rect x="122.5" y="2.6" width="5.8" height="5.8" rx="0.6" fill="none" stroke="#303030" stroke-width="0.9"/><rect x="123.5" y="5.6" width="3.8" height="2.2" fill="#303030"/>
<text x="69.5" y="16.38" font-size="4.8" fill="#e8e8e8" stroke="#e8e8e8" stroke-width="0.1" text-anchor="start" font-weight="normal" font-family="Liberation Sans" >hm</text>
<text x="69.5" y="25.68" font-size="4.8" fill="#e8e8e8" stroke="#e8e8e8" stroke-width="0.1" text-anchor="start" font-weight="normal" font-family="Liberation Sans" >Ø</text>
<rect x="89" y="10.5" width="14" height="8.3" fill="#0c0c0c" />
<text x="89.5" y="16.88" font-size="4.8" fill="#e8e8e8" stroke="#e8e8e8" stroke-width="0.1" text-anchor="start" font-weight="normal" font-family="Liberation Sans" >DAP</text>
<rect x="112" y="10.5" width="9.5" height="8.3" fill="#0c0c0c" />
<text x="113.5" y="17.18" font-size="4.8" fill="#e8e8e8" stroke="#e8e8e8" stroke-width="0.1" text-anchor="start" font-weight="normal" font-family="Liberation Sans" >d</text>
<text x="89.5" y="26.18" font-size="4.8" fill="#e8e8e8" stroke="#e8e8e8" stroke-width="0.1" text-anchor="start" font-weight="normal" font-family="Liberation Sans" >h</text>
<rect x="80.3" y="10.5" width="8.3" height="8.5" fill="#efefef" />
<text x="81.1" y="16.41" font-size="4.9" fill="#606060"  text-anchor="start" font-weight="normal" font-family="Liberation Sans" >0,5</text>
<rect x="103.5" y="10.5" width="7.9" height="8.5" fill="#efefef" />
<text x="104.3" y="16.41" font-size="4.9" fill="#606060"  text-anchor="start" font-weight="normal" font-family="Liberation Sans" >0</text>
<rect x="121.9" y="10.5" width="7.8" height="8.5" fill="#efefef" />
<text x="122.7" y="16.41" font-size="4.9" fill="#606060"  text-anchor="start" font-weight="normal" font-family="Liberation Sans" >3</text>
<rect x="80.3" y="19.7" width="8.3" height="8.5" fill="#efefef" />
<text x="81.1" y="25.61" font-size="4.9" fill="#606060"  text-anchor="start" font-weight="normal" font-family="Liberation Sans" >2,5</text>
<rect x="103.5" y="19.7" width="7.9" height="8.5" fill="#efefef" />
<text x="104.3" y="25.61" font-size="4.9" fill="#606060"  text-anchor="start" font-weight="normal" font-family="Liberation Sans" >5</text>
<rect x="114" y="19.7" width="15.7" height="8.5" fill="#f0f0f0" />
<text x="116" y="25.61" font-size="4.6" fill="#505050" stroke="#505050" stroke-width="0.04" text-anchor="start" font-weight="normal" font-family="Liberation Sans" >W</text>
<path d="M125 23.5 l1.2 1 l1.2 -1" stroke="#777" stroke-width="0.5" fill="none"/>
<rect x="133" y="7" width="37" height="16.6" fill="#c5c5c5" />
<circle cx="151.2" cy="15.4" r="8" fill="#dcc9c0" stroke="#b89080" stroke-width="0.5"/>
<path d="M152.2 15.4 L157.6 18.1 M152.1 15.9 L155.4 21.0 M151.7 16.3 L152.1 22.3 M151.2 16.4 L148.5 21.8 M150.7 16.3 L145.6 19.6 M150.3 15.9 L144.3 16.3 M150.2 15.4 L144.8 12.7 M150.3 14.9 L147.0 9.8 M150.7 14.5 L150.3 8.5 M151.2 14.4 L153.9 9.0 M151.7 14.5 L156.8 11.2 M152.1 14.9 L158.1 14.5" stroke="#9a7060" stroke-width="0.45" fill="none"/>
<circle cx="151.2" cy="15.4" r="0.9" fill="#603028"/>
<path d="M164.5 3.5 L168 6 L164.5 8.5 Z" fill="#f0f0f0"/>
<path d="M163.5 24.5 L168.5 24.5 L166 27 Z" fill="#f0f0f0"/>
<rect x="181" y="0.8" width="59.5" height="12.5" fill="none" stroke="#e0222c" stroke-width="1.8"/>
<g stroke="#e6eae6" stroke-width="1.1" fill="none" stroke-linecap="round">
<rect x="183.3" y="6.2" width="4.6" height="2.6" rx="1.3" transform="rotate(-45 185.6 7.5)"/><rect x="186.4" y="3.6" width="4.6" height="2.6" rx="1.3" transform="rotate(-45 188.7 4.9)"/>
<circle cx="197.3" cy="8.6" r="1.4"/><circle cx="200.3" cy="8.6" r="1.4"/><circle cx="198.8" cy="5.6" r="1.4"/><circle cx="201.5" cy="4.2" r="0.9"/>
<circle cx="211" cy="6.5" r="1"/><circle cx="209" cy="4.8" r="1.1"/><circle cx="213" cy="4.8" r="1.1"/><circle cx="209" cy="8.3" r="1.1"/><circle cx="213" cy="8.3" r="1.1"/>
<circle cx="220.4" cy="4.6" r="1.2"/><circle cx="220.4" cy="8.8" r="1.2"/><path d="M220.4 5.8 v1.8"/><rect x="223.2" y="3.4" width="1.8" height="1.8"/>
<path d="M232.2 9.5 v-6 h2.2 v4"/><circle cx="235.3" cy="8.8" r="1.2"/>
</g>
<g stroke="#e6e6e6" stroke-width="1" fill="none" stroke-linecap="round">
<path d="M184.5 18 a2.8 1.8 0 1 0 4.5 1.2 M187 17.5 l2.2 -2.5 M186.8 15.5 l2.6 2.2"/>
<path d="M196.5 21.5 v-5.5 l2 -2 h3.5 v7.5 z"/><rect x="197.8" y="18.5" width="2.5" height="2" fill="#e6e6e6"/>
<path d="M208 21.5 v-4.5 h6.5 v4.5 z M209.5 17 v-2 h3.5 M212 16 l2 -2"/>
</g>
<g fill="#e6e6e6"><circle cx="220.2" cy="16.2" r="0.9"/><circle cx="224.2" cy="17.2" r="0.9"/><circle cx="221.6" cy="20.8" r="1.2"/></g>
<circle cx="233.7" cy="18.5" r="2.8" stroke="#e6e6e6" stroke-width="0.9" fill="none"/><circle cx="233.7" cy="18.5" r="0.6" fill="#e6e6e6"/>
<text x="182" y="29.18" font-size="4.1" fill="#d8d8d8" stroke="#d8d8d8" stroke-width="0.1" text-anchor="start" font-weight="normal" font-family="Liberation Sans" >Distribuição Livre com espaçamento Constante</text>
<g fill="#f4f4f4">
<text x="256" y="15" font-size="14" font-weight="bold" text-anchor="middle" font-family="Liberation Sans">?</text>
<path d="M247.5 5 l3.5 3.5 M247.5 5 h2.2 M247.5 5 v2.2" stroke="#f4f4f4" stroke-width="1" fill="none"/>
<path d="M272 4.5 h14 v8 h-10 l-2 1.5 v-1.5 h-2 z"/>
<text x="304" y="11" font-size="9" text-anchor="middle" font-family="Liberation Sans">N</text>
<rect x="297" y="12" width="14" height="0.9"/><rect x="297" y="14" width="14" height="0.9"/>
<path d="M322.4 13 l4.5 -6 l1.5 2 l2.5 -4 l4.5 8 z"/>
<path d="M350 9 l6 -6 M353.5 3 h2.7 v2.7 M356 10 l-6 6 M349.8 13.3 v2.7 h2.7" stroke="#f4f4f4" stroke-width="1.3" fill="none"/>
<path d="M349 8.5 l2 2 M356 9 l2 -2" stroke="#f4f4f4" stroke-width="1" fill="none"/>
<rect x="372" y="3.6" width="2.2" height="1.5"/><rect x="375.2" y="3.6" width="10.8" height="1.5"/>
<rect x="372" y="6.2" width="2.2" height="1.5"/><rect x="375.2" y="6.2" width="10.8" height="1.5"/>
<rect x="372" y="8.8" width="2.2" height="1.5"/><rect x="375.2" y="8.8" width="10.8" height="1.5"/>
<rect x="372" y="11.4" width="2.2" height="1.5"/><rect x="375.2" y="11.4" width="10.8" height="1.5"/>
<rect x="372" y="14" width="2.2" height="1.5"/><rect x="375.2" y="14" width="10.8" height="1.5"/>
<path d="M405.5 2.8 l6 3.3 v6.6 l-6 3.3 l-6 -3.3 v-6.6 z" fill="none" stroke="#f4f4f4" stroke-width="2.2" stroke-dasharray="5 1.5"/><circle cx="405.5" cy="9.5" r="2.3"/>
</g>
<text x="254" y="20.63" font-size="4.1" fill="#e6e6e6" stroke="#e6e6e6" stroke-width="0.1" text-anchor="middle" font-weight="normal" font-family="Liberation Sans" >Informe</text>
<text x="279" y="20.63" font-size="4.1" fill="#e6e6e6" stroke="#e6e6e6" stroke-width="0.1" text-anchor="middle" font-weight="normal" font-family="Liberation Sans" >Chave</text>
<text x="304" y="20.63" font-size="4.1" fill="#e6e6e6" stroke="#e6e6e6" stroke-width="0.1" text-anchor="middle" font-weight="normal" font-family="Liberation Sans" >Nomear</text>
<text x="329" y="20.63" font-size="4.1" fill="#e6e6e6" stroke="#e6e6e6" stroke-width="0.1" text-anchor="middle" font-weight="normal" font-family="Liberation Sans" >Niveis</text>
<text x="353.5" y="20.63" font-size="4.1" fill="#e6e6e6" stroke="#e6e6e6" stroke-width="0.1" text-anchor="middle" font-weight="normal" font-family="Liberation Sans" >Troca</text>
<text x="379" y="20.63" font-size="4.1" fill="#e6e6e6" stroke="#e6e6e6" stroke-width="0.1" text-anchor="middle" font-weight="normal" font-family="Liberation Sans" >Tabela</text>
<text x="406" y="20.63" font-size="4.1" fill="#e6e6e6" stroke="#e6e6e6" stroke-width="0.1" text-anchor="middle" font-weight="normal" font-family="Liberation Sans" >VisualPlan</text>
<g fill="#f0f0f0">
<path d="M428.5 2.8 l1.2 2.6 l2.8 0.3 l-2.1 1.9 l0.6 2.8 l-2.5 -1.4 l-2.5 1.4 l0.6 -2.8 l-2.1 -1.9 l2.8 -0.3 z"/>
</g>
<g stroke="#f0f0f0" stroke-width="0.7" fill="none">
<path d="M463 4 v6 M465 4 v6 M467 4 v6 M461.5 5 h7 M461.5 7 h7 M461.5 9 h7"/>
<path d="M493.5 3 h4.5 l2 2 v5.5 h-6.5 z M495 5 h2 v2.5 h-2"/>
<path d="M537 3.5 h7 v6.5 h-7 z M537 5.5 h7 M539.5 3.5 v6.5 M541.5 3.5 v6.5" stroke-width="0.6"/>
<path d="M569 3 v7 h8 M570.5 8.5 l4 -4 M570.5 8.5 h2 M570.5 8.5 v-2"/>
<path d="M429.5 16 v5 a1.2 1.2 0 0 0 2.4 0 v-5.5 a1.6 1.6 0 0 0 -3.2 0 v5"/>
<path d="M464.5 15.5 v4 M462.5 18 l2 2 l2 -2 M460.5 22 h8" stroke-width="1.1"/>
<path d="M494.5 16 h6 v5.5 h-6 z M500 21 l1.5 1.5"/>
<path d="M534 15.5 a2 2 0 0 1 2 2 l-2 3 l-2 -3 a2 2 0 0 1 2 -2 M532 22 h3 M535 20.5 l1.5 1.5 M536.5 20.5 l-1.5 1.5"/>
<path d="M576 16 v6 h6 v-4 M577.5 17.5 l1.5 -1.5 l1.5 1.5"/>
</g>
<text x="434" y="7.70" font-size="4.0" fill="#e2e2e2" stroke="#e2e2e2" stroke-width="0.1" text-anchor="start" font-weight="normal" font-family="Liberation Sans" >Simbolos</text>
<text x="471" y="7.70" font-size="4.0" fill="#e2e2e2" stroke="#e2e2e2" stroke-width="0.1" text-anchor="start" font-weight="normal" font-family="Liberation Sans" >Grelha</text>
<text x="502" y="7.70" font-size="4.0" fill="#e2e2e2" stroke="#e2e2e2" stroke-width="0.1" text-anchor="start" font-weight="normal" font-family="Liberation Sans" >Paper Space</text>
<text x="545" y="7.70" font-size="4.0" fill="#e2e2e2" stroke="#e2e2e2" stroke-width="0.1" text-anchor="start" font-weight="normal" font-family="Liberation Sans" >Tabela</text>
<text x="578.5" y="7.70" font-size="4.0" fill="#e2e2e2" stroke="#e2e2e2" stroke-width="0.1" text-anchor="start" font-weight="normal" font-family="Liberation Sans" >Mover p/ Origem</text>
<text x="434" y="20.80" font-size="4.0" fill="#e2e2e2" stroke="#e2e2e2" stroke-width="0.1" text-anchor="start" font-weight="normal" font-family="Liberation Sans" >Detalhe</text>
<text x="470.5" y="20.80" font-size="4.0" fill="#e2e2e2" stroke="#e2e2e2" stroke-width="0.1" text-anchor="start" font-weight="normal" font-family="Liberation Sans" >Achatar</text>
<text x="504" y="20.80" font-size="4.0" fill="#e2e2e2" stroke="#e2e2e2" stroke-width="0.1" text-anchor="start" font-weight="normal" font-family="Liberation Sans" >Inicial Info</text>
<text x="539.5" y="20.80" font-size="4.0" fill="#e2e2e2" stroke="#e2e2e2" stroke-width="0.1" text-anchor="start" font-weight="normal" font-family="Liberation Sans" >Inicial Rápido</text>
<text x="585" y="20.80" font-size="4.0" fill="#e2e2e2" stroke="#e2e2e2" stroke-width="0.1" text-anchor="start" font-weight="normal" font-family="Liberation Sans" >UCS World</text>
<g stroke="#e8e8e8" fill="none" stroke-width="0.8">
<path d="M751 3.6 a3.2 3.2 0 1 0 3.4 0" stroke="#f2f2f2" stroke-width="0.9"/><path d="M752.7 2.6 v3.6" stroke="#f2f2f2" stroke-width="0.9"/>
<rect x="763" y="3.5" width="7" height="4.5" stroke="#f0f0f0" stroke-width="0.9"/><path d="M766.5 8 v1.2 M765 9.4 h3" stroke="#f0f0f0"/>
<path d="M776 6.5 h7" stroke-width="1"/>
<path d="M789.5 3 l6.5 7 M796 3 l-6.5 7" stroke-width="0.9"/>
<circle cx="766.3" cy="17.5" r="2.8"/><circle cx="766.3" cy="17.5" r="1"/>
</g>
<rect x="773" y="13.1" width="26.5" height="9.2" fill="#f8f8f8" />
<text x="775" y="19.48" font-size="4.8" fill="#404040"  text-anchor="start" font-weight="normal" font-family="Liberation Sans" >1/125</text>
<path d="M793 17 l1.5 1.2 l1.5 -1.2" stroke="#666" stroke-width="0.5" fill="none"/>
<rect x="1.5" y="32" width="7" height="7" fill="#2a6fc9"/><path d="M3.3 38 L5 33.5 L6.7 38" stroke="#fff" stroke-width="0.8" fill="none"/>
<text x="10" y="37.95" font-size="4.7" fill="#2a2a2a"  text-anchor="start" font-weight="normal" font-family="Liberation Sans" >BricsCAD Ultimate (NOT FOR RESALE License) - [Dica_auto.dwg]</text>
<g stroke="#333" stroke-width="0.7" fill="none"><path d="M750 35.5 h5"/><rect x="769" y="33.8" width="3.5" height="3.5"/><path d="M770 33 h3.5 v3.5"/><path d="M789.3 33.5 l3.8 4 M793.1 33.5 l-3.8 4"/></g>
<g stroke="#a0a6ae" stroke-width="0.7" fill="none">
<path d="M10.5 43.5 h2.5 l1.5 1.5 v5 h-4 z" stroke="#d0d0d0"/><circle cx="14" cy="49.5" r="1" fill="#e0b040" stroke="none"/>
<path d="M20 44 h3 v3 h-3 z M21.5 46 h3 v3 h-3 z"/>
<rect x="32.5" y="43.5" width="5" height="6" stroke="#9ab0d0"/><path d="M33.5 47 h3" stroke="#9ab0d0"/>
<rect x="43" y="43.5" width="5" height="6" stroke="#9ab0d0"/><path d="M44 45 h3" stroke="#9ab0d0"/>
<path d="M53.5 47 h5 v3 h-5 z M54.5 47 v-3 h3 v3"/>
<path d="M67 46 l2 -2 M67 46 l2 2 M67 46 h3.5 a2 2 0 0 1 0 4 h-1"/>
<path d="M82 46 l-2 -2 M82 46 l-2 2 M82 46 h-3.5 a2 2 0 0 0 0 4 h1"/>
<path d="M88.5 44 h3.5 v3.5 h-3.5 z M90.5 46 h3 v3.5 h-3 z"/>
<path d="M99 44 h3 v3 h-3 z M101.5 47 h3 v3 h-3 z"/>
<path d="M110.5 46 h5 v3 h-5 z M111.5 46 v-2 h3 v2 M112 49 v1.5 h2 v-1.5"/>
<rect x="121.8" y="44" width="5" height="5.5" rx="1"/><path d="M122 46 h4.5"/>
</g>
<rect x="6" y="55.8" width="8.6" height="8.7" fill="#2f7ad8"/><path d="M8.3 63 L10.3 57.5 L12.3 63" stroke="#fff" stroke-width="0.9" fill="none"/>
<path d="M17.5 59.5 l1 1 l1 -1" stroke="#aaa" stroke-width="0.5" fill="none"/>
<text x="28" y="61.75" font-size="5.0" fill="#e8e8e8" stroke="#e8e8e8" stroke-width="0.1" text-anchor="start" font-weight="normal" font-family="Liberation Sans" >Home</text>
<text x="49" y="61.75" font-size="5.0" fill="#d8d8d8" stroke="#d8d8d8" stroke-width="0.1" text-anchor="start" font-weight="normal" font-family="Liberation Sans" >Insert</text>
<text x="70" y="61.75" font-size="5.0" fill="#d8d8d8" stroke="#d8d8d8" stroke-width="0.1" text-anchor="start" font-weight="normal" font-family="Liberation Sans" >Annotate</text>
<text x="99" y="61.75" font-size="5.0" fill="#d8d8d8" stroke="#d8d8d8" stroke-width="0.1" text-anchor="start" font-weight="normal" font-family="Liberation Sans" >2D Parametric</text>
<text x="139.6" y="61.75" font-size="5.0" fill="#d8d8d8" stroke="#d8d8d8" stroke-width="0.1" text-anchor="start" font-weight="normal" font-family="Liberation Sans" >Operations</text>
<text x="174" y="61.75" font-size="5.0" fill="#d8d8d8" stroke="#d8d8d8" stroke-width="0.1" text-anchor="start" font-weight="normal" font-family="Liberation Sans" >View</text>
<text x="193" y="61.75" font-size="5.0" fill="#d8d8d8" stroke="#d8d8d8" stroke-width="0.1" text-anchor="start" font-weight="normal" font-family="Liberation Sans" >Manage</text>
<text x="220.7" y="61.75" font-size="5.0" fill="#d8d8d8" stroke="#d8d8d8" stroke-width="0.1" text-anchor="start" font-weight="normal" font-family="Liberation Sans" >Output</text>
<text x="244" y="61.75" font-size="5.0" fill="#d8d8d8" stroke="#d8d8d8" stroke-width="0.1" text-anchor="start" font-weight="normal" font-family="Liberation Sans" >ExpressTools</text>
<text x="282.5" y="61.75" font-size="5.0" fill="#d8d8d8" stroke="#d8d8d8" stroke-width="0.1" text-anchor="start" font-weight="normal" font-family="Liberation Sans" >Productivity</text>
<text x="318" y="61.75" font-size="5.0" fill="#d8d8d8" stroke="#d8d8d8" stroke-width="0.1" text-anchor="start" font-weight="normal" font-family="Liberation Sans" >AI Predict</text>
<rect x="27" y="64" width="15" height="0.9" fill="#5b9be8" />
<rect x="726" y="56" width="55" height="8.3" fill="#3c3f45" rx="1"/>
<circle cx="730.5" cy="59.5" r="1.8" stroke="#aaa" stroke-width="0.6" fill="none"/><path d="M729.2 60.8 l-1.5 1.5" stroke="#aaa" stroke-width="0.6"/>
<text x="739" y="61.81" font-size="4.6" fill="#8c8c8c" stroke="#8c8c8c" stroke-width="0.05" text-anchor="start" font-weight="normal" font-family="Liberation Sans" >Search in Ribbon</text>
<rect x="789.5" y="57.5" width="6" height="6" stroke="#b8b8b8" stroke-width="0.6" fill="none"/><rect x="792.5" y="60.5" width="2.6" height="2.6" fill="#ddd"/>
<circle cx="2" cy="80.5" r="0.5" fill="#aaa"/>
<circle cx="2" cy="82.5" r="0.5" fill="#aaa"/>
<circle cx="2" cy="84.5" r="0.5" fill="#aaa"/>
<rect x="106" y="68" width="0.8" height="37" fill="#33363b" />
<rect x="213" y="68" width="0.8" height="37" fill="#33363b" />
<rect x="284.6" y="68" width="0.8" height="37" fill="#33363b" />
<rect x="423" y="68" width="0.8" height="37" fill="#33363b" />
<rect x="517" y="68" width="0.8" height="37" fill="#33363b" />
<rect x="559" y="68" width="0.8" height="37" fill="#33363b" />
<rect x="600" y="68" width="0.8" height="37" fill="#33363b" />
<g filter="url(#glow)" fill="#3a70c8" opacity="0.6"><circle cx="15.5" cy="82" r="2.6"/><circle cx="34.5" cy="81" r="2.2"/><circle cx="47" cy="79" r="2"/><circle cx="59" cy="77.5" r="2.8"/><circle cx="77.5" cy="80.5" r="2.5"/></g>
<line x1="15" y1="82.6" x2="26" y2="70.3" stroke="#c8ccd4" stroke-width="0.8"/><circle cx="26" cy="70.3" r="0.9" fill="#e0e0e0"/>
<path d="M34 83 v-5 a6.8 6.8 0 0 1 13.6 0 v2" stroke="#c8ccd4" stroke-width="0.8" fill="none"/>
<circle cx="60.5" cy="76.4" r="6.3" stroke="#c8ccd4" stroke-width="0.8" fill="none"/>
<path d="M80 82.5 a6 6 0 1 1 5 -3.5" stroke="#c8ccd4" stroke-width="0.8" fill="none"/><circle cx="85.5" cy="77" r="1.1" fill="#eee"/>
<rect x="90" y="71.5" width="5" height="4" stroke="#c8ccd4" stroke-width="0.7" fill="none"/>
<circle cx="92.5" cy="84" r="2.5" stroke="#c8ccd4" stroke-width="0.7" fill="none"/><path d="M90.5 86 l4 -4" stroke="#c8ccd4" stroke-width="0.6"/>
<circle cx="92.5" cy="93.5" r="2.7" fill="#3b6dbb" stroke="#9cb8e0" stroke-width="0.6"/>
<path d="M98 73.5 h2 M99 72.5 v2" stroke="#bbb" stroke-width="0.5"/>
<path d="M98 84 h2 M99 83 v2" stroke="#bbb" stroke-width="0.5"/>
<path d="M98 93.5 h2 M99 92.5 v2" stroke="#bbb" stroke-width="0.5"/>
<text x="20.3" y="92.95" font-size="5.0" fill="#e4e4e4" stroke="#e4e4e4" stroke-width="0.1" text-anchor="middle" font-weight="normal" font-family="Liberation Sans" >Line</text>
<text x="41" y="92.95" font-size="5.0" fill="#e4e4e4" stroke="#e4e4e4" stroke-width="0.1" text-anchor="middle" font-weight="normal" font-family="Liberation Sans" >Polyline</text>
<text x="60.5" y="92.95" font-size="5.0" fill="#e4e4e4" stroke="#e4e4e4" stroke-width="0.1" text-anchor="middle" font-weight="normal" font-family="Liberation Sans" >Circle</text>
<text x="79.3" y="92.95" font-size="5.0" fill="#e4e4e4" stroke="#e4e4e4" stroke-width="0.1" text-anchor="middle" font-weight="normal" font-family="Liberation Sans" >Arc</text>
<rect x="59" y="97.7" width="2" height="0.8" fill="#ddd" />
<rect x="77" y="97.7" width="2" height="0.8" fill="#ddd" />
<text x="53.5" y="105.86" font-size="3.9" fill="#b8b8b8" stroke="#b8b8b8" stroke-width="0.1" text-anchor="middle" font-weight="bold" font-family="Liberation Sans" >DRAW</text>
<path d="M63 104 l1 0.8 l1 -0.8" stroke="#999" stroke-width="0.4" fill="none"/>
<g stroke="#9fb6d8" stroke-width="0.7" fill="none">
<circle cx="115.5" cy="74.7" r="2.5" fill="#2d4f88"/><path d="M112.5 74.7 h6 M115.5 71.7 v6" stroke="#cfe"/>
<circle cx="113" cy="81.5" r="0.9"/><circle cx="116" cy="85" r="2.2" fill="#2d4f88"/>
<path d="M113 91.5 v6 h5 M113 91.5 h3 l2 2 v4"/>
<circle cx="145.5" cy="74.7" r="2.5"/><circle cx="145.5" cy="74.7" r="0.8" fill="#9fb6d8"/>
<path d="M145.5 81.5 l-2 5.5 h4 z M145.5 81 v7" stroke="#aab"/>
<path d="M142.5 92.5 h6 v3.5 h-6 z M143.5 94.5 h4"/>
<path d="M171 72 h5 v5 h-5 z M173.5 71 v7"/>
<path d="M171 88 v-4 a3 3 0 0 1 3 -3 h2"/>
</g>
<rect x="170.5" y="91" width="2" height="6" fill="#3d6fc0"/><rect x="173.5" y="91" width="2" height="6" fill="#3d6fc0"/>
<path d="M201.5 72.5 l4 4 M205.5 72.5 l-4 4" stroke="#8a3a3a" stroke-width="0.7"/>
<circle cx="203" cy="85" r="2.3" stroke="#bbb" stroke-width="0.7" fill="none"/><path d="M204.5 83.5 l2 -2" stroke="#bbb" stroke-width="0.6"/>
<path d="M202.5 92 v5 h2" stroke="#9fb6d8" stroke-width="0.8" fill="none"/>
<text x="121.3" y="76.45" font-size="5.0" fill="#e0e0e0" stroke="#e0e0e0" stroke-width="0.1" text-anchor="start" font-weight="normal" font-family="Liberation Sans" >Move</text>
<text x="151" y="76.45" font-size="5.0" fill="#e0e0e0" stroke="#e0e0e0" stroke-width="0.1" text-anchor="start" font-weight="normal" font-family="Liberation Sans" >Rotate</text>
<text x="179" y="76.45" font-size="5.0" fill="#e0e0e0" stroke="#e0e0e0" stroke-width="0.1" text-anchor="start" font-weight="normal" font-family="Liberation Sans" >Trim</text>
<text x="121.3" y="86.05" font-size="5.0" fill="#e0e0e0" stroke="#e0e0e0" stroke-width="0.1" text-anchor="start" font-weight="normal" font-family="Liberation Sans" >Copy</text>
<text x="151" y="86.05" font-size="5.0" fill="#e0e0e0" stroke="#e0e0e0" stroke-width="0.1" text-anchor="start" font-weight="normal" font-family="Liberation Sans" >Mirror</text>
<text x="179" y="86.05" font-size="5.0" fill="#e0e0e0" stroke="#e0e0e0" stroke-width="0.1" text-anchor="start" font-weight="normal" font-family="Liberation Sans" >Fillet</text>
<text x="121.3" y="96.35" font-size="5.0" fill="#e0e0e0" stroke="#e0e0e0" stroke-width="0.1" text-anchor="start" font-weight="normal" font-family="Liberation Sans" >Stretch</text>
<text x="151" y="96.35" font-size="5.0" fill="#e0e0e0" stroke="#e0e0e0" stroke-width="0.1" text-anchor="start" font-weight="normal" font-family="Liberation Sans" >Scale</text>
<text x="179" y="96.35" font-size="5.0" fill="#e0e0e0" stroke="#e0e0e0" stroke-width="0.1" text-anchor="start" font-weight="normal" font-family="Liberation Sans" >Array</text>
<path d="M137 74.7 h2" stroke="#aaa" stroke-width="0.5"/>
<path d="M137 84.3 h2" stroke="#aaa" stroke-width="0.5"/>
<path d="M193 74.7 h2" stroke="#aaa" stroke-width="0.5"/>
<path d="M193 84.3 h2" stroke="#aaa" stroke-width="0.5"/>
<path d="M193 94.6 h2" stroke="#aaa" stroke-width="0.5"/>
<text x="157" y="105.86" font-size="3.9" fill="#b8b8b8" stroke="#b8b8b8" stroke-width="0.1" text-anchor="middle" font-weight="bold" font-family="Liberation Sans" >MODIFY</text>
<path d="M168 104 l1 0.8 l1 -0.8" stroke="#c05050" stroke-width="0.4" fill="none"/>
<g stroke="#d8d8d8" stroke-width="0.8" fill="none"><path d="M222 70 h10 M227 70 v11"/><path d="M222 81.5 h14 M222 83.5 h14"/></g>
<text x="229" y="89.88" font-size="4.8" fill="#e0e0e0" stroke="#e0e0e0" stroke-width="0.1" text-anchor="middle" font-weight="normal" font-family="Liberation Sans" >Multiline</text>
<text x="229" y="95.28" font-size="4.8" fill="#e0e0e0" stroke="#e0e0e0" stroke-width="0.1" text-anchor="middle" font-weight="normal" font-family="Liberation Sans" >Text</text>
<rect x="228" y="97.7" width="2" height="0.8" fill="#ddd" />
<rect x="245" y="75.5" width="16" height="4.5" fill="#254a80" />
<path d="M247 77.7 h12 M247 77.7 l1.5 -1 M247 77.7 l1.5 1 M259 77.7 l-1.5 -1 M259 77.7 l-1.5 1" stroke="#9cc0f0" stroke-width="0.5"/>
<text x="253" y="92.61" font-size="4.6" fill="#e0e0e0" stroke="#e0e0e0" stroke-width="0.1" text-anchor="middle" font-weight="normal" font-family="Liberation Sans" >Dimension</text>
<g stroke="#9fb6d8" stroke-width="0.7" fill="none"><path d="M270.5 71.5 v5 M276 71.5 v5 M270.5 74 h5.5"/><path d="M270.5 82 h5 M273 82 v4.5"/></g>
<g fill="#d8d8d8">
<rect x="270.5" y="91.0" width="1.1" height="1.1"/>
<rect x="272.1" y="91.0" width="1.1" height="1.1"/>
<rect x="273.7" y="91.0" width="1.1" height="1.1"/>
<rect x="275.3" y="91.0" width="1.1" height="1.1"/>
<rect x="270.5" y="92.6" width="1.1" height="1.1"/>
<rect x="272.1" y="92.6" width="1.1" height="1.1"/>
<rect x="273.7" y="92.6" width="1.1" height="1.1"/>
<rect x="275.3" y="92.6" width="1.1" height="1.1"/>
<rect x="270.5" y="94.2" width="1.1" height="1.1"/>
<rect x="272.1" y="94.2" width="1.1" height="1.1"/>
<rect x="273.7" y="94.2" width="1.1" height="1.1"/>
<rect x="275.3" y="94.2" width="1.1" height="1.1"/>
</g>
<path d="M278 73.5 l0.8 0.8 l0.8 -0.8" stroke="#aaa" stroke-width="0.4" fill="none"/>
<path d="M278 83.5 l0.8 0.8 l0.8 -0.8" stroke="#aaa" stroke-width="0.4" fill="none"/>
<text x="246.8" y="105.86" font-size="3.9" fill="#b8b8b8" stroke="#b8b8b8" stroke-width="0.1" text-anchor="middle" font-weight="bold" font-family="Liberation Sans" >ANNOTATIONS</text>
<g stroke="#d8d8d8" stroke-width="0.7" fill="none"><path d="M292.5 77 l9 -5 h5 l-9 5 z"/><path d="M292.5 79.5 l0 0 h5 l9 -5"/><path d="M292.5 82 h5 l9 -5"/></g>
<text x="300" y="92.68" font-size="4.8" fill="#e0e0e0" stroke="#e0e0e0" stroke-width="0.1" text-anchor="middle" font-weight="normal" font-family="Liberation Sans" >Layers</text>
<rect x="309.7" y="70.2" width="66.8" height="8.3" fill="#2b2e33" stroke="#44474c" stroke-width="0.6"/>
<path d="M369 74 l1.2 1 l1.2 -1" stroke="#888" stroke-width="0.5" fill="none"/>
<g stroke="#d8d8d8" stroke-width="0.7" fill="none"><path d="M390 77 v-3 M392 70 h9 v7 h-8 M395 74 h2"/><path d="M410 71 h4 v4 M408 73.5 a2 2 0 1 0 3 0"/><path d="M409 82 h4 v4 h-4 z"/><path d="M408 92 l2 2 l3 -3" stroke="#e8e8e8"/></g>
<path d="M416 93 l0.8 0.8 l0.8 -0.8" stroke="#aaa" stroke-width="0.4" fill="none"/>
<path d="M433 80 l5 -5 l3 3 l-5 5 z" fill="#b89a60" stroke="#d8c080" stroke-width="0.5"/><path d="M438 75 l4 -3.5 l1.5 1.5 l-3.5 4" fill="#8a7040"/>
<text x="438" y="92.95" font-size="5.0" fill="#e0e0e0" stroke="#e0e0e0" stroke-width="0.1" text-anchor="middle" font-weight="normal" font-family="Liberation Sans" >Match</text>
<rect x="448.2" y="68.7" width="66" height="9" fill="#2b2e33" stroke="#44474c" stroke-width="0.6"/>
<rect x="448.2" y="78.5" width="66" height="9.7" fill="#2b2e33" stroke="#44474c" stroke-width="0.6"/>
<rect x="448.2" y="89" width="56.5" height="9" fill="#2b2e33" stroke="#44474c" stroke-width="0.6"/>
<rect x="449.8" y="71.2" width="5.8" height="4.2" fill="#e8101a" />
<text x="458" y="74.91" font-size="4.6" fill="#e6e6e6" stroke="#e6e6e6" stroke-width="0.1" text-anchor="start" font-weight="normal" font-family="Liberation Sans" >ByLayer</text>
<rect x="450" y="83.3" width="22" height="0.6" fill="#cfcfcf" />
<text x="474" y="84.91" font-size="4.6" fill="#e6e6e6" stroke="#e6e6e6" stroke-width="0.1" text-anchor="start" font-weight="normal" font-family="Liberation Sans" >ByLayer</text>
<rect x="450" y="93.5" width="18" height="0.6" fill="#cfcfcf" />
<text x="470" y="95.11" font-size="4.6" fill="#e6e6e6" stroke="#e6e6e6" stroke-width="0.1" text-anchor="start" font-weight="normal" font-family="Liberation Sans" >ByLayer</text>
<path d="M507 72.89999999999999 l1 0.8 l1 -0.8" stroke="#777" stroke-width="0.4" fill="none"/>
<path d="M507 82.89999999999999 l1 0.8 l1 -0.8" stroke="#777" stroke-width="0.4" fill="none"/>
<path d="M497 93.1 l1 0.8 l1 -0.8" stroke="#777" stroke-width="0.4" fill="none"/>
<path d="M507 92.5 h6 M507 95 h6 M510 91.5 v2 M508.5 94 v2" stroke="#ccc" stroke-width="0.6"/>
<text x="469" y="105.86" font-size="3.9" fill="#b8b8b8" stroke="#b8b8b8" stroke-width="0.1" text-anchor="middle" font-weight="bold" font-family="Liberation Sans" >PROPERTIES</text>
<g stroke="#d8d8d8" stroke-width="0.7" fill="none"><circle cx="530.5" cy="77.5" r="3"/><rect x="531" y="71" width="5" height="5"/><path d="M538.5 70 q1.5 0 1.5 2 v2.5 l1 1 l-1 1 v2.5 q0 2 -1.5 2"/></g>
<text x="533" y="92.88" font-size="4.8" fill="#e0e0e0" stroke="#e0e0e0" stroke-width="0.1" text-anchor="middle" font-weight="normal" font-family="Liberation Sans" >Group ...</text>
<g stroke="#c8c8c8" stroke-width="0.6" fill="none"><path d="M548 73 h3 v3 h-3 z M550 71 h2"/><path d="M548 83 h3 v3 h-3 z"/><path d="M548 91 v5 h1 M552 91 v5 h-1" stroke="#58a858"/></g>
<circle cx="548.5" cy="72.5" r="1.2" fill="#b04050" opacity="0.7"/>
<text x="539.7" y="105.86" font-size="3.9" fill="#b8b8b8" stroke="#b8b8b8" stroke-width="0.1" text-anchor="middle" font-weight="bold" font-family="Liberation Sans" >GROUPS</text>
<g stroke="#b0b0b0" stroke-width="0.7" fill="none"><path d="M567.5 71 v4 M581.5 71 v4 M567.5 73 h14"/><path d="M570 72.2 v1.6 M572.5 72.2 v1.6 M575 72.2 v1.6 M577.5 72.2 v1.6 M580 72.2 v1.6" stroke-width="0.5"/></g>
<rect x="567.5" y="78" width="14" height="4.5" fill="#4a4230" stroke="#c0a050" stroke-width="0.6" stroke-dasharray="1.2 0.6"/>
<text x="575.5" y="92.75" font-size="5.0" fill="#e0e0e0" stroke="#e0e0e0" stroke-width="0.1" text-anchor="middle" font-weight="normal" font-family="Liberation Sans" >Distance</text>
<rect x="574.5" y="97.7" width="2" height="0.8" fill="#ddd" />
<g stroke="#c8c8c8" stroke-width="0.6" fill="none"><path d="M590 71.5 l3 3 M592 72 l2 3"/><path d="M590 81.5 h4 v3 l-1.5 1.5"/><rect x="590.5" y="90.5" width="3.5" height="5" fill="#bbb"/></g>
<text x="580.7" y="105.86" font-size="3.9" fill="#b8b8b8" stroke="#b8b8b8" stroke-width="0.1" text-anchor="middle" font-weight="bold" font-family="Liberation Sans" >UTILITIES</text>
<path d="M608.5 71 h5 v11 h-5 z" fill="none" stroke="#c8a860" stroke-width="0.7"/><path d="M613 73 h5 l2 2 v8 h-7 z" fill="#2b2e33" stroke="#ddd" stroke-width="0.7"/>
<text x="615" y="92.75" font-size="5.0" fill="#e0e0e0" stroke="#e0e0e0" stroke-width="0.1" text-anchor="middle" font-weight="normal" font-family="Liberation Sans" >Paste</text>
<rect x="614" y="97.7" width="2" height="0.8" fill="#ddd" />
<g stroke="#b8c0d0" stroke-width="0.6" fill="none"><path d="M629.5 71 l2 3 l2 -3 M631.5 74 v1"/><path d="M628.5 81 h3 v3 h-3 z M630 83 h3 v3 h-3 z"/></g>
<path d="M635 83 l0.8 0.8 l0.8 -0.8" stroke="#aaa" stroke-width="0.4" fill="none"/>
<text x="622.7" y="105.86" font-size="3.9" fill="#b8b8b8" stroke="#b8b8b8" stroke-width="0.1" text-anchor="middle" font-weight="bold" font-family="Liberation Sans" >CLIPBOARD</text>
<g stroke="#8a3424" stroke-width="0.8">
<line x1="492" y1="258.5" x2="504" y2="258.5"/><line x1="635" y1="258.5" x2="647" y2="258.5"/>
<line x1="534" y1="288" x2="534" y2="300"/><line x1="605.5" y1="288" x2="605.5" y2="300"/>
<line x1="564" y1="330.2" x2="576" y2="330.2"/>
</g>
<use href="#tree" x="76.0" y="254.0" width="62" height="62"/>
<use href="#tree" x="147.5" y="254.0" width="62" height="62"/>
<use href="#tree" x="219.0" y="254.0" width="62" height="62"/>
<use href="#tree" x="290.5" y="254.0" width="62" height="62"/>
<use href="#tree" x="431.5" y="227.5" width="62" height="62"/>
<use href="#tree" x="503.0" y="227.5" width="62" height="62"/>
<use href="#tree" x="574.5" y="227.5" width="62" height="62"/>
<use href="#tree" x="646.0" y="227.5" width="62" height="62"/>
<use href="#tree" x="503.0" y="299.2" width="62" height="62"/>
<use href="#tree" x="575.0" y="299.2" width="62" height="62"/>
<line x1="107" y1="285" x2="348" y2="285" stroke="#2f82da" stroke-width="1.5"/>
<circle cx="107" cy="285" r="2.6" fill="#6cc83c"/>
<circle cx="227.5" cy="285" r="2.6" fill="#6cc83c"/>
<circle cx="347.5" cy="285" r="2.6" fill="#6cc83c"/>
<circle cx="760.5" cy="141.4" r="15.8" fill="#9b9b9b"/>
<circle cx="773.0" cy="141.4" r="0.7" fill="#5a5a5a"/>
<circle cx="771.3" cy="147.7" r="0.7" fill="#5a5a5a"/>
<circle cx="766.8" cy="152.2" r="0.7" fill="#5a5a5a"/>
<circle cx="760.5" cy="153.9" r="0.7" fill="#5a5a5a"/>
<circle cx="754.2" cy="152.2" r="0.7" fill="#5a5a5a"/>
<circle cx="749.7" cy="147.7" r="0.7" fill="#5a5a5a"/>
<circle cx="748.0" cy="141.4" r="0.7" fill="#5a5a5a"/>
<circle cx="749.7" cy="135.2" r="0.7" fill="#5a5a5a"/>
<circle cx="754.2" cy="130.6" r="0.7" fill="#5a5a5a"/>
<circle cx="760.5" cy="128.9" r="0.7" fill="#5a5a5a"/>
<circle cx="766.8" cy="130.6" r="0.7" fill="#5a5a5a"/>
<circle cx="771.3" cy="135.2" r="0.7" fill="#5a5a5a"/>
<g stroke-width="0.8" fill="none"><path d="M34.5 326.5 V353.4" stroke="#7a9a88"/><path d="M34.5 353.4 H58.4" stroke="#d0d0d0"/><path d="M34.5 343 H44 V353" stroke="#c8c8c8"/><path d="M35 354.2 H45" stroke="#8a3a3a"/></g>
<text x="34.5" y="323.90" font-size="4" fill="#9fcf9f" stroke="#9fcf9f" stroke-width="0.1" text-anchor="middle" font-weight="normal" font-family="Liberation Sans" >Y</text>
<text x="62.5" y="355.11" font-size="4.6" fill="#d06060" stroke="#d06060" stroke-width="0.1" text-anchor="middle" font-weight="normal" font-family="Liberation Sans" >X</text>
<text x="39.3" y="350.05" font-size="5" fill="#e0e0e0" stroke="#e0e0e0" stroke-width="0.1" text-anchor="middle" font-weight="normal" font-family="Liberation Sans" >W</text>
<text x="5.6" y="117.47" font-size="4.2" fill="#d0d0d0" stroke="#d0d0d0" stroke-width="0.1" text-anchor="start" font-weight="normal" font-family="Liberation Sans" >Start</text>
<path d="M22 114.5 l3 3 M25 114.5 l-3 3" stroke="#ddd" stroke-width="0.6"/>
<text x="33.7" y="117.68" font-size="4.8" fill="#f4f4f4" stroke="#f4f4f4" stroke-width="0.1" text-anchor="start" font-weight="bold" font-family="Liberation Sans" >Dica_auto*</text>
<path d="M66 114.5 l3 3 M69 114.5 l-3 3" stroke="#ddd" stroke-width="0.6"/>
<rect x="74" y="112" width="8.5" height="7.5" fill="#1c1d21" />
<path d="M76.5 116 h3 M78 114.5 v3" stroke="#999" stroke-width="0.5"/>
<text x="790.5" y="116.62" font-size="3.2" fill="#aaa" stroke="#aaa" stroke-width="0.1" text-anchor="middle" font-weight="normal" font-family="Liberation Sans" >Tools</text>
<g stroke="#d0d0d0" stroke-width="0.7" fill="none">
<path d="M786 125.5 h10 M786 129 h10"/><circle cx="789" cy="125.5" r="1" fill="#d0d0d0"/><circle cx="793" cy="129" r="1" fill="#d0d0d0"/>
<path d="M786 150 l4 -4 h6 l-4 4 z M786 152 h6 l4 -4"/>
<path d="M789.5 166 v4.5 a1.5 1.5 0 0 0 3 0 v-5.5 a2 2 0 0 0 -4 0 v5.5"/>
<path d="M786 193 v-4 l4 -3 l4 3 v4 z M788 192 l4 -3"/>
<path d="M792 232 h4 v3 h-4 z M792 228 h4 v3 h-4 z M786.5 224.5 h4 v2.5 h-4 z M788.5 227 v6 h3.5 M788.5 229.5 h3.5"/>
<path d="M786 255 h10 a2.5 2.5 0 0 0 -2 -4 a3 3 0 0 0 -5.5 0 a2 2 0 0 0 -2.5 4 z"/>
</g>
<text x="791" y="212.2" font-size="6" font-style="italic" fill="#d8d8d8" text-anchor="middle" font-family="Liberation Serif">ƒ(x)</text>
<rect x="0" y="387" width="4.5" height="23" fill="#3a3c40"/><path d="M1.2 390 l1 -1 l1 1" stroke="#ccc" stroke-width="0.4" fill="none"/>
<text x="5.2" y="398.05" font-size="5.0" fill="#f4f4f4" stroke="#f4f4f4" stroke-width="0.05" text-anchor="start" font-weight="normal" font-family="Liberation Mono" >Cancel</text>
<text x="5.2" y="405.05" font-size="5.0" fill="#c8c8c8"  text-anchor="start" font-weight="normal" font-family="Liberation Mono" >:</text>
<path d="M5 408.3 H140" stroke="#a8a8a8" stroke-width="0.5" stroke-dasharray="1 1"/>
<path d="M777.5 394 v10" stroke="#666" stroke-width="1"/>
<text x="5" y="415.41" font-size="4.9" fill="#bcbcbc" stroke="#bcbcbc" stroke-width="0.1" text-anchor="start" font-weight="normal" font-family="Liberation Mono" font-style="italic">: Enter command</text>
<path d="M5 421.5 h4 M5 423.5 h4 M5 425.5 h4" stroke="#666" stroke-width="0.5"/>
<rect x="12" y="417.5" width="28" height="12.5" fill="#34373c" />
<rect x="17" y="421" width="5" height="4" stroke="#ccc" stroke-width="0.6" fill="none"/><path d="M16.5 425.5 h6" stroke="#ccc" stroke-width="0.6"/>
<text x="25" y="425.11" font-size="4.6" fill="#e8e8e8" stroke="#e8e8e8" stroke-width="0.1" text-anchor="start" font-weight="bold" font-family="Liberation Sans" >Model</text>
<text x="45" y="425.14" font-size="4.7" fill="#c8c8c8" stroke="#c8c8c8" stroke-width="0.1" text-anchor="start" font-weight="normal" font-family="Liberation Sans" >Layout1</text>
<rect x="64" y="419" width="0.6" height="9" fill="#444" />
<text x="66" y="425.14" font-size="4.7" fill="#c8c8c8" stroke="#c8c8c8" stroke-width="0.1" text-anchor="start" font-weight="normal" font-family="Liberation Sans" >Layout2</text>
<path d="M89 423.5 h4 M91 421.5 v4" stroke="#bbb" stroke-width="0.6"/>
<text x="343" y="425.90" font-size="4.3" fill="#e8e8e8" stroke="#e8e8e8" stroke-width="0.15" text-anchor="start" font-weight="normal" font-family="Liberation Sans" >28.78, 28.19, 0</text>
<g stroke="#e0e0e0" stroke-width="0.7" fill="none">
<rect x="384.6" y="421.5" width="5" height="4"/>
<path d="M417 421 v4 M415 425 l2 -1 l2 1"/>
<path d="M465 421.5 h4 v4 h-4 z" stroke="#b05050"/>
<circle cx="526" cy="424" r="2"/>
<path d="M648 421 h4 v4 h-4 z"/>
<path d="M677 421 a1.6 1.6 0 0 1 1.6 1.6 l-1.6 2.5 l-1.6 -2.5 a1.6 1.6 0 0 1 1.6 -1.6"/>
<rect x="699" y="421" width="4.5" height="5"/>
<circle cx="741.5" cy="424" r="2.3"/>
<circle cx="781" cy="424" r="1.8" stroke="#555"/>
</g>
<rect x="439" y="419.2" width="20.3" height="9.4" fill="#1f3552" stroke="#4a78b8" stroke-width="0.7"/>
<rect x="493.8" y="419.2" width="27.2" height="9.4" fill="#1f3552" stroke="#4a78b8" stroke-width="0.7"/>
<rect x="557" y="419.2" width="26" height="9.4" fill="#1f3552" stroke="#4a78b8" stroke-width="0.7"/>
<rect x="587" y="419.2" width="25.5" height="9.4" fill="#1f3552" stroke="#4a78b8" stroke-width="0.7"/>
<rect x="613" y="419.2" width="7" height="9.4" fill="#1f3552" stroke="#4a78b8" stroke-width="0.7"/>
<rect x="620" y="419.2" width="22" height="9.4" fill="#1f3552" stroke="#4a78b8" stroke-width="0.7"/>
<text x="391" y="425.67" font-size="4.2" fill="#e0e0e0" stroke="#e0e0e0" stroke-width="0.16" text-anchor="start" font-weight="normal" font-family="Liberation Sans" >TILE</text>
<text x="422" y="425.67" font-size="4.2" fill="#e0e0e0" stroke="#e0e0e0" stroke-width="0.16" text-anchor="start" font-weight="normal" font-family="Liberation Sans" >1:1</text>
<text x="446" y="425.67" font-size="4.2" fill="#c8dcf8" stroke="#c8dcf8" stroke-width="0.16" text-anchor="start" font-weight="normal" font-family="Liberation Sans" >GRID</text>
<text x="471" y="425.67" font-size="4.2" fill="#e0e0e0" stroke="#e0e0e0" stroke-width="0.16" text-anchor="start" font-weight="normal" font-family="Liberation Sans" >SNAP</text>
<text x="501" y="425.67" font-size="4.2" fill="#c8dcf8" stroke="#c8dcf8" stroke-width="0.16" text-anchor="start" font-weight="normal" font-family="Liberation Sans" >ORTHO</text>
<text x="531" y="425.67" font-size="4.2" fill="#e0e0e0" stroke="#e0e0e0" stroke-width="0.16" text-anchor="start" font-weight="normal" font-family="Liberation Sans" >POLAR</text>
<text x="565" y="425.67" font-size="4.2" fill="#c8dcf8" stroke="#c8dcf8" stroke-width="0.16" text-anchor="start" font-weight="normal" font-family="Liberation Sans" >STRACK</text>
<text x="595" y="425.67" font-size="4.2" fill="#c8dcf8" stroke="#c8dcf8" stroke-width="0.16" text-anchor="start" font-weight="normal" font-family="Liberation Sans" >ESNAP</text>
<text x="627" y="425.67" font-size="4.2" fill="#c8dcf8" stroke="#c8dcf8" stroke-width="0.16" text-anchor="start" font-weight="normal" font-family="Liberation Sans" >DYN</text>
<text x="652" y="425.67" font-size="4.2" fill="#e0e0e0" stroke="#e0e0e0" stroke-width="0.16" text-anchor="start" font-weight="normal" font-family="Liberation Sans" >QUAD</text>
<text x="681.5" y="425.67" font-size="4.2" fill="#e0e0e0" stroke="#e0e0e0" stroke-width="0.16" text-anchor="start" font-weight="normal" font-family="Liberation Sans" >HIDE</text>
<text x="705" y="425.81" font-size="4.6" fill="#e8e8e8" stroke="#e8e8e8" stroke-width="0.16" text-anchor="start" font-weight="normal" font-family="Liberation Sans" >Drafting</text>
<text x="747" y="425.67" font-size="4.2" fill="#e0e0e0" stroke="#e0e0e0" stroke-width="0.16" text-anchor="start" font-weight="normal" font-family="Liberation Sans" >PUBLISH</text>
<path d="M406 423.6 l1 0.8 l1 -0.8" stroke="#999" stroke-width="0.4" fill="none"/>
<path d="M432 423.6 l1 0.8 l1 -0.8" stroke="#999" stroke-width="0.4" fill="none"/>
<path d="M488 423.6 l1 0.8 l1 -0.8" stroke="#999" stroke-width="0.4" fill="none"/>
<path d="M552 423.6 l1 0.8 l1 -0.8" stroke="#999" stroke-width="0.4" fill="none"/>
<path d="M615.5 423.6 l1 0.8 l1 -0.8" stroke="#999" stroke-width="0.4" fill="none"/>
<path d="M669 423.6 l1 0.8 l1 -0.8" stroke="#999" stroke-width="0.4" fill="none"/>
<path d="M730 423.6 l1 0.8 l1 -0.8" stroke="#999" stroke-width="0.4" fill="none"/>
<path d="M772 423.6 l1 0.8 l1 -0.8" stroke="#999" stroke-width="0.4" fill="none"/>
<path d="M441 421.5 v5 M443 421.5 v5 M441 423 h2" stroke="#9cc0f0" stroke-width="0.5"/>
<path d="M495.5 421.5 v5 h3" stroke="#9cc0f0" stroke-width="0.5"/><path d="M559 427 l4 -5" stroke="#9cc0f0" stroke-width="0.5"/>
<path d="M590 426 v-3 a1.5 1.5 0 0 1 3 0 v3" stroke="#e05050" stroke-width="0.6" fill="none"/><path d="M615 423.5 l1.5 1 l1.5 -1" stroke="#9cc0f0" stroke-width="0.5" fill="none"/>
<path d="M622 421.5 h4 v4 h-4 z" stroke="#9cc0f0" stroke-width="0.5" fill="none"/>
<circle cx="793.5" cy="421.5" r="0.6" fill="#ddd"/>
<circle cx="793.5" cy="424" r="0.6" fill="#ddd"/>
<circle cx="793.5" cy="426.5" r="0.6" fill="#ddd"/>
<rect x="309.7" y="70.2" width="66.8" height="8.3" fill="#2b2e33" stroke="#4a4d52" stroke-width="0.6"/>
<path d="M369 74 l1.2 1 l1.2 -1" stroke="#888" stroke-width="0.5" fill="none"/>
<rect x="309.5" y="79.2" width="96" height="151.1" fill="#2c2e33" stroke="#1a1b1e" stroke-width="0.6"/>
<rect x="310" y="79.4" width="94" height="9.8" fill="#45484e" />
<rect x="310" y="190" width="94" height="10" fill="#3c3f45" />
<rect x="403.7" y="80" width="1" height="107" fill="#b8bcc4" />
<ellipse cx="314.3" cy="84.5" rx="2.2" ry="2.8" fill="#8a7848"/><ellipse cx="314.3" cy="84.3" rx="1.4" ry="1.7" fill="#c0a870"/>
<circle cx="322.5" cy="84.5" r="1.3" fill="none" stroke="#e8e8e8" stroke-width="0.7"/>
<path d="M320 84.5 h-1 M325 84.5 h1 M322.5 82.0 v-1 M322.5 87.0 v1 M320.7 82.7 l-0.7 -0.7 M324.3 82.7 l0.7 -0.7 M320.7 86.3 l-0.7 0.7 M324.3 86.3 l0.7 0.7" stroke="#e0e0e0" stroke-width="0.5"/>
<rect x="329.3" y="82.3" width="3.6" height="4.4" fill="#393b40"/>
<rect x="337.4" y="82.1" width="4.6" height="4.8" rx="1.4" fill="#cfcbdc"/><rect x="338.4" y="84.9" width="2.6" height="1" fill="#8a8aa0"/>
<rect x="345" y="81.3" width="6.4" height="6.4" fill="#ffffff"/>
<text x="353.2" y="86.22" font-size="4.9" fill="#e4e4e4" stroke="#e4e4e4" stroke-width="0.03" text-anchor="start" font-weight="normal" font-family="Liberation Sans" >0</text>
<ellipse cx="314.3" cy="94.55" rx="2.2" ry="2.8" fill="#8a7848"/><ellipse cx="314.3" cy="94.35" rx="1.4" ry="1.7" fill="#c0a870"/>
<circle cx="322.5" cy="94.55" r="1.3" fill="none" stroke="#e8e8e8" stroke-width="0.7"/>
<path d="M320 94.55 h-1 M325 94.55 h1 M322.5 92.05 v-1 M322.5 97.05 v1 M320.7 92.75 l-0.7 -0.7 M324.3 92.75 l0.7 -0.7 M320.7 96.35 l-0.7 0.7 M324.3 96.35 l0.7 0.7" stroke="#e0e0e0" stroke-width="0.5"/>
<rect x="329.3" y="92.35" width="3.6" height="4.4" fill="#393b40"/>
<rect x="337.4" y="92.14999999999999" width="4.6" height="4.8" rx="1.4" fill="#cfcbdc"/><rect x="338.4" y="94.95" width="2.6" height="1" fill="#8a8aa0"/>
<rect x="345" y="91.35" width="6.4" height="6.4" fill="#ffffff"/>
<text x="353.2" y="96.27" font-size="4.9" fill="#e4e4e4" stroke="#e4e4e4" stroke-width="0.03" text-anchor="start" font-weight="normal" font-family="Liberation Sans" >ARG-Cotas</text>
<ellipse cx="314.3" cy="104.6" rx="2.2" ry="2.8" fill="#8a7848"/><ellipse cx="314.3" cy="104.39999999999999" rx="1.4" ry="1.7" fill="#c0a870"/>
<circle cx="322.5" cy="104.6" r="1.3" fill="none" stroke="#e8e8e8" stroke-width="0.7"/>
<path d="M320 104.6 h-1 M325 104.6 h1 M322.5 102.1 v-1 M322.5 107.1 v1 M320.7 102.8 l-0.7 -0.7 M324.3 102.8 l0.7 -0.7 M320.7 106.39999999999999 l-0.7 0.7 M324.3 106.39999999999999 l0.7 0.7" stroke="#e0e0e0" stroke-width="0.5"/>
<rect x="329.3" y="102.39999999999999" width="3.6" height="4.4" fill="#393b40"/>
<rect x="337.3" y="102.8" width="4" height="3.8" rx="0.8" fill="#44474c"/>
<rect x="345" y="101.39999999999999" width="6.4" height="6.4" fill="#ffffff"/>
<text x="353.2" y="106.31" font-size="4.9" fill="#e4e4e4" stroke="#e4e4e4" stroke-width="0.03" text-anchor="start" font-weight="normal" font-family="Liberation Sans" >Defpoints</text>
<ellipse cx="314.3" cy="114.65" rx="2.2" ry="2.8" fill="#8a7848"/><ellipse cx="314.3" cy="114.45" rx="1.4" ry="1.7" fill="#c0a870"/>
<circle cx="322.5" cy="114.65" r="1.3" fill="none" stroke="#e8e8e8" stroke-width="0.7"/>
<path d="M320 114.65 h-1 M325 114.65 h1 M322.5 112.15 v-1 M322.5 117.15 v1 M320.7 112.85000000000001 l-0.7 -0.7 M324.3 112.85000000000001 l0.7 -0.7 M320.7 116.45 l-0.7 0.7 M324.3 116.45 l0.7 0.7" stroke="#e0e0e0" stroke-width="0.5"/>
<rect x="329.3" y="112.45" width="3.6" height="4.4" fill="#393b40"/>
<rect x="337.4" y="112.25" width="4.6" height="4.8" rx="1.4" fill="#cfcbdc"/><rect x="338.4" y="115.05000000000001" width="2.6" height="1" fill="#8a8aa0"/>
<rect x="345" y="111.45" width="6.4" height="6.4" fill="#ff1010"/>
<text x="353.2" y="116.37" font-size="4.9" fill="#e4e4e4" stroke="#e4e4e4" stroke-width="0.03" text-anchor="start" font-weight="normal" font-family="Liberation Sans" >PA-Arbusto</text>
<ellipse cx="314.3" cy="124.7" rx="2.2" ry="2.8" fill="#8a7848"/><ellipse cx="314.3" cy="124.5" rx="1.4" ry="1.7" fill="#c0a870"/>
<circle cx="322.5" cy="124.7" r="1.3" fill="none" stroke="#e8e8e8" stroke-width="0.7"/>
<path d="M320 124.7 h-1 M325 124.7 h1 M322.5 122.2 v-1 M322.5 127.2 v1 M320.7 122.9 l-0.7 -0.7 M324.3 122.9 l0.7 -0.7 M320.7 126.5 l-0.7 0.7 M324.3 126.5 l0.7 0.7" stroke="#e0e0e0" stroke-width="0.5"/>
<rect x="329.3" y="122.5" width="3.6" height="4.4" fill="#393b40"/>
<rect x="337.4" y="122.3" width="4.6" height="4.8" rx="1.4" fill="#cfcbdc"/><rect x="338.4" y="125.10000000000001" width="2.6" height="1" fill="#8a8aa0"/>
<rect x="345" y="121.5" width="6.4" height="6.4" fill="#f4f000"/>
<text x="353.2" y="126.42" font-size="4.9" fill="#e4e4e4" stroke="#e4e4e4" stroke-width="0.03" text-anchor="start" font-weight="normal" font-family="Liberation Sans" >PA-Arvore</text>
<ellipse cx="314.3" cy="134.75" rx="2.2" ry="2.8" fill="#8a7848"/><ellipse cx="314.3" cy="134.55" rx="1.4" ry="1.7" fill="#c0a870"/>
<circle cx="322.5" cy="134.75" r="1.3" fill="none" stroke="#e8e8e8" stroke-width="0.7"/>
<path d="M320 134.75 h-1 M325 134.75 h1 M322.5 132.25 v-1 M322.5 137.25 v1 M320.7 132.95 l-0.7 -0.7 M324.3 132.95 l0.7 -0.7 M320.7 136.55 l-0.7 0.7 M324.3 136.55 l0.7 0.7" stroke="#e0e0e0" stroke-width="0.5"/>
<rect x="329.3" y="132.55" width="3.6" height="4.4" fill="#393b40"/>
<rect x="337.4" y="132.35" width="4.6" height="4.8" rx="1.4" fill="#cfcbdc"/><rect x="338.4" y="135.15" width="2.6" height="1" fill="#8a8aa0"/>
<rect x="345" y="131.55" width="6.4" height="6.4" fill="#f4f000"/>
<text x="353.2" y="136.47" font-size="4.9" fill="#e4e4e4" stroke="#e4e4e4" stroke-width="0.03" text-anchor="start" font-weight="normal" font-family="Liberation Sans" >PA-Bancos</text>
<ellipse cx="314.3" cy="144.8" rx="2.2" ry="2.8" fill="#8a7848"/><ellipse cx="314.3" cy="144.60000000000002" rx="1.4" ry="1.7" fill="#c0a870"/>
<circle cx="322.5" cy="144.8" r="1.3" fill="none" stroke="#e8e8e8" stroke-width="0.7"/>
<path d="M320 144.8 h-1 M325 144.8 h1 M322.5 142.3 v-1 M322.5 147.3 v1 M320.7 143.0 l-0.7 -0.7 M324.3 143.0 l0.7 -0.7 M320.7 146.60000000000002 l-0.7 0.7 M324.3 146.60000000000002 l0.7 0.7" stroke="#e0e0e0" stroke-width="0.5"/>
<rect x="329.3" y="142.60000000000002" width="3.6" height="4.4" fill="#393b40"/>
<rect x="337.4" y="142.4" width="4.6" height="4.8" rx="1.4" fill="#cfcbdc"/><rect x="338.4" y="145.20000000000002" width="2.6" height="1" fill="#8a8aa0"/>
<rect x="345" y="141.60000000000002" width="6.4" height="6.4" fill="#f4f000"/>
<text x="353.2" y="146.52" font-size="4.9" fill="#e4e4e4" stroke="#e4e4e4" stroke-width="0.03" text-anchor="start" font-weight="normal" font-family="Liberation Sans" >PA-Brinquedos</text>
<ellipse cx="314.3" cy="154.85000000000002" rx="2.2" ry="2.8" fill="#8a7848"/><ellipse cx="314.3" cy="154.65000000000003" rx="1.4" ry="1.7" fill="#c0a870"/>
<circle cx="322.5" cy="154.85000000000002" r="1.3" fill="none" stroke="#e8e8e8" stroke-width="0.7"/>
<path d="M320 154.85000000000002 h-1 M325 154.85000000000002 h1 M322.5 152.35000000000002 v-1 M322.5 157.35000000000002 v1 M320.7 153.05 l-0.7 -0.7 M324.3 153.05 l0.7 -0.7 M320.7 156.65000000000003 l-0.7 0.7 M324.3 156.65000000000003 l0.7 0.7" stroke="#e0e0e0" stroke-width="0.5"/>
<rect x="329.3" y="152.65000000000003" width="3.6" height="4.4" fill="#393b40"/>
<rect x="337.4" y="152.45000000000002" width="4.6" height="4.8" rx="1.4" fill="#cfcbdc"/><rect x="338.4" y="155.25000000000003" width="2.6" height="1" fill="#8a8aa0"/>
<rect x="345" y="151.65000000000003" width="6.4" height="6.4" fill="#ff1010"/>
<text x="353.2" y="156.57" font-size="4.9" fill="#e4e4e4" stroke="#e4e4e4" stroke-width="0.03" text-anchor="start" font-weight="normal" font-family="Liberation Sans" >PA-Canteiro</text>
<ellipse cx="314.3" cy="164.9" rx="2.2" ry="2.8" fill="#8a7848"/><ellipse cx="314.3" cy="164.70000000000002" rx="1.4" ry="1.7" fill="#c0a870"/>
<circle cx="322.5" cy="164.9" r="1.3" fill="none" stroke="#e8e8e8" stroke-width="0.7"/>
<path d="M320 164.9 h-1 M325 164.9 h1 M322.5 162.4 v-1 M322.5 167.4 v1 M320.7 163.1 l-0.7 -0.7 M324.3 163.1 l0.7 -0.7 M320.7 166.70000000000002 l-0.7 0.7 M324.3 166.70000000000002 l0.7 0.7" stroke="#e0e0e0" stroke-width="0.5"/>
<rect x="329.3" y="162.70000000000002" width="3.6" height="4.4" fill="#393b40"/>
<rect x="337.4" y="162.5" width="4.6" height="4.8" rx="1.4" fill="#cfcbdc"/><rect x="338.4" y="165.3" width="2.6" height="1" fill="#8a8aa0"/>
<rect x="345" y="161.70000000000002" width="6.4" height="6.4" fill="#f4f000"/>
<text x="353.2" y="166.62" font-size="4.9" fill="#e4e4e4" stroke="#e4e4e4" stroke-width="0.03" text-anchor="start" font-weight="normal" font-family="Liberation Sans" >PA-Chave</text>
<ellipse cx="314.3" cy="174.95" rx="2.2" ry="2.8" fill="#8a7848"/><ellipse cx="314.3" cy="174.75" rx="1.4" ry="1.7" fill="#c0a870"/>
<circle cx="322.5" cy="174.95" r="1.3" fill="none" stroke="#e8e8e8" stroke-width="0.7"/>
<path d="M320 174.95 h-1 M325 174.95 h1 M322.5 172.45 v-1 M322.5 177.45 v1 M320.7 173.14999999999998 l-0.7 -0.7 M324.3 173.14999999999998 l0.7 -0.7 M320.7 176.75 l-0.7 0.7 M324.3 176.75 l0.7 0.7" stroke="#e0e0e0" stroke-width="0.5"/>
<rect x="329.3" y="172.75" width="3.6" height="4.4" fill="#393b40"/>
<rect x="337.4" y="172.54999999999998" width="4.6" height="4.8" rx="1.4" fill="#cfcbdc"/><rect x="338.4" y="175.35" width="2.6" height="1" fill="#8a8aa0"/>
<rect x="345" y="171.75" width="6.4" height="6.4" fill="#f4f000"/>
<text x="353.2" y="176.66" font-size="4.9" fill="#e4e4e4" stroke="#e4e4e4" stroke-width="0.03" text-anchor="start" font-weight="normal" font-family="Liberation Sans" >PA-Divisoes</text>
<ellipse cx="314.3" cy="185.0" rx="2.2" ry="2.8" fill="#8a7848"/><ellipse cx="314.3" cy="184.8" rx="1.4" ry="1.7" fill="#c0a870"/>
<circle cx="322.5" cy="185.0" r="1.3" fill="none" stroke="#e8e8e8" stroke-width="0.7"/>
<path d="M320 185.0 h-1 M325 185.0 h1 M322.5 182.5 v-1 M322.5 187.5 v1 M320.7 183.2 l-0.7 -0.7 M324.3 183.2 l0.7 -0.7 M320.7 186.8 l-0.7 0.7 M324.3 186.8 l0.7 0.7" stroke="#e0e0e0" stroke-width="0.5"/>
<rect x="329.3" y="182.8" width="3.6" height="4.4" fill="#393b40"/>
<rect x="337.4" y="182.6" width="4.6" height="4.8" rx="1.4" fill="#cfcbdc"/><rect x="338.4" y="185.4" width="2.6" height="1" fill="#8a8aa0"/>
<rect x="345" y="181.8" width="6.4" height="6.4" fill="#ff1010"/>
<text x="353.2" y="186.72" font-size="4.9" fill="#e4e4e4" stroke="#e4e4e4" stroke-width="0.03" text-anchor="start" font-weight="normal" font-family="Liberation Sans" >PA-Formato</text>
<ellipse cx="314.3" cy="195.05" rx="2.2" ry="2.8" fill="#8a7848"/><ellipse cx="314.3" cy="194.85000000000002" rx="1.4" ry="1.7" fill="#c0a870"/>
<circle cx="322.5" cy="195.05" r="1.3" fill="none" stroke="#e8e8e8" stroke-width="0.7"/>
<path d="M320 195.05 h-1 M325 195.05 h1 M322.5 192.55 v-1 M322.5 197.55 v1 M320.7 193.25 l-0.7 -0.7 M324.3 193.25 l0.7 -0.7 M320.7 196.85000000000002 l-0.7 0.7 M324.3 196.85000000000002 l0.7 0.7" stroke="#e0e0e0" stroke-width="0.5"/>
<rect x="329.3" y="192.85000000000002" width="3.6" height="4.4" fill="#393b40"/>
<rect x="337.3" y="193.25" width="4" height="3.8" rx="0.8" fill="#44474c"/>
<rect x="345" y="191.85000000000002" width="6.4" height="6.4" fill="#ff1010"/>
<text x="353.2" y="196.77" font-size="4.9" fill="#e4e4e4" stroke="#e4e4e4" stroke-width="0.03" text-anchor="start" font-weight="normal" font-family="Liberation Sans" >PA-Guias</text>
<ellipse cx="314.3" cy="205.10000000000002" rx="2.2" ry="2.8" fill="#8a7848"/><ellipse cx="314.3" cy="204.90000000000003" rx="1.4" ry="1.7" fill="#c0a870"/>
<circle cx="322.5" cy="205.10000000000002" r="1.3" fill="none" stroke="#e8e8e8" stroke-width="0.7"/>
<path d="M320 205.10000000000002 h-1 M325 205.10000000000002 h1 M322.5 202.60000000000002 v-1 M322.5 207.60000000000002 v1 M320.7 203.3 l-0.7 -0.7 M324.3 203.3 l0.7 -0.7 M320.7 206.90000000000003 l-0.7 0.7 M324.3 206.90000000000003 l0.7 0.7" stroke="#e0e0e0" stroke-width="0.5"/>
<rect x="329.3" y="202.90000000000003" width="3.6" height="4.4" fill="#393b40"/>
<rect x="337.4" y="202.70000000000002" width="4.6" height="4.8" rx="1.4" fill="#cfcbdc"/><rect x="338.4" y="205.50000000000003" width="2.6" height="1" fill="#8a8aa0"/>
<rect x="345" y="201.90000000000003" width="6.4" height="6.4" fill="#ff1010"/>
<text x="353.2" y="206.82" font-size="4.9" fill="#e4e4e4" stroke="#e4e4e4" stroke-width="0.03" text-anchor="start" font-weight="normal" font-family="Liberation Sans" >PA-Hachuras</text>
<ellipse cx="314.3" cy="215.15" rx="2.2" ry="2.8" fill="#8a7848"/><ellipse cx="314.3" cy="214.95000000000002" rx="1.4" ry="1.7" fill="#c0a870"/>
<circle cx="322.5" cy="215.15" r="1.3" fill="none" stroke="#e8e8e8" stroke-width="0.7"/>
<path d="M320 215.15 h-1 M325 215.15 h1 M322.5 212.65 v-1 M322.5 217.65 v1 M320.7 213.35 l-0.7 -0.7 M324.3 213.35 l0.7 -0.7 M320.7 216.95000000000002 l-0.7 0.7 M324.3 216.95000000000002 l0.7 0.7" stroke="#e0e0e0" stroke-width="0.5"/>
<rect x="329.3" y="212.95000000000002" width="3.6" height="4.4" fill="#393b40"/>
<rect x="337.4" y="212.75" width="4.6" height="4.8" rx="1.4" fill="#cfcbdc"/><rect x="338.4" y="215.55" width="2.6" height="1" fill="#8a8aa0"/>
<rect x="345" y="211.95000000000002" width="6.4" height="6.4" fill="#ff1010"/>
<text x="353.2" y="216.87" font-size="4.9" fill="#e4e4e4" stroke="#e4e4e4" stroke-width="0.03" text-anchor="start" font-weight="normal" font-family="Liberation Sans" >PA-HatchSolid</text>
<ellipse cx="314.3" cy="225.20000000000002" rx="2.2" ry="2.8" fill="#8a7848"/><ellipse cx="314.3" cy="225.00000000000003" rx="1.4" ry="1.7" fill="#c0a870"/>
<circle cx="322.5" cy="225.20000000000002" r="1.3" fill="none" stroke="#e8e8e8" stroke-width="0.7"/>
<path d="M320 225.20000000000002 h-1 M325 225.20000000000002 h1 M322.5 222.70000000000002 v-1 M322.5 227.70000000000002 v1 M320.7 223.4 l-0.7 -0.7 M324.3 223.4 l0.7 -0.7 M320.7 227.00000000000003 l-0.7 0.7 M324.3 227.00000000000003 l0.7 0.7" stroke="#e0e0e0" stroke-width="0.5"/>
<rect x="329.3" y="223.00000000000003" width="3.6" height="4.4" fill="#393b40"/>
<rect x="337.4" y="222.8" width="4.6" height="4.8" rx="1.4" fill="#cfcbdc"/><rect x="338.4" y="225.60000000000002" width="2.6" height="1" fill="#8a8aa0"/>
<rect x="345" y="222.00000000000003" width="6.4" height="6.4" fill="#ff1010"/>
<text x="353.2" y="226.92" font-size="4.9" fill="#e4e4e4" stroke="#e4e4e4" stroke-width="0.03" text-anchor="start" font-weight="normal" font-family="Liberation Sans" >PA-Herbacea</text>
<ellipse cx="314.3" cy="74.3" rx="2.2" ry="2.8" fill="#8a7848"/><ellipse cx="314.3" cy="74.1" rx="1.4" ry="1.7" fill="#c0a870"/>
<circle cx="322.5" cy="74.3" r="1.3" fill="none" stroke="#e8e8e8" stroke-width="0.7"/>
<path d="M320 74.3 h-1 M325 74.3 h1 M322.5 71.8 v-1 M322.5 76.8 v1 M320.7 72.5 l-0.7 -0.7 M324.3 72.5 l0.7 -0.7 M320.7 76.1 l-0.7 0.7 M324.3 76.1 l0.7 0.7" stroke="#e0e0e0" stroke-width="0.5"/>
<rect x="329.3" y="72.1" width="3.6" height="4.4" fill="#393b40"/>
<rect x="337.4" y="71.89999999999999" width="4.6" height="4.8" rx="1.4" fill="#cfcbdc"/><rect x="338.4" y="74.7" width="2.6" height="1" fill="#8a8aa0"/>
<rect x="345" y="71.1" width="6.4" height="6.4" fill="#ffffff"/>
<text x="353.2" y="76.02" font-size="4.9" fill="#e4e4e4" stroke="#e4e4e4" stroke-width="0.03" text-anchor="start" font-weight="normal" font-family="Liberation Sans" >0</text>
<rect x="307" y="188.5" width="100.5" height="11.6" fill="none" stroke="#e0303a" stroke-width="1.8"/>
</svg>
</body></html>
